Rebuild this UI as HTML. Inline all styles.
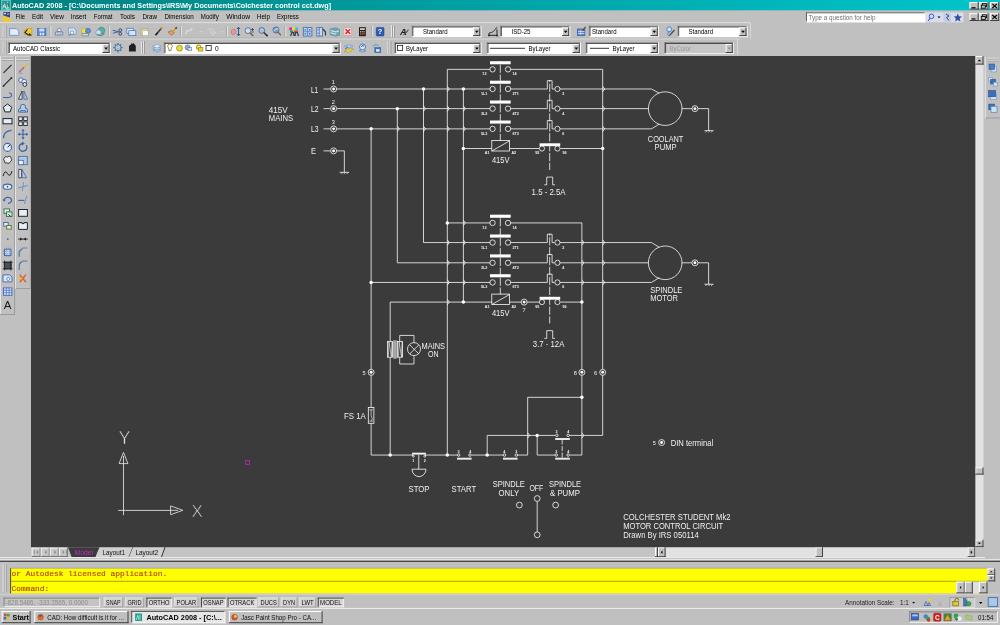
<!DOCTYPE html>
<html lang="en"><head><meta charset="utf-8"><title>AutoCAD 2008 - Colchester control cct.dwg</title>
<style>
html,body{margin:0;padding:0;background:#c0c0c0;overflow:hidden;width:1000px;height:625px}
svg{display:block;position:absolute;left:0;top:0;will-change:transform}
text{font-family:"Liberation Sans",sans-serif;white-space:pre}
.mono{font-family:"Liberation Mono",monospace}
</style></head><body>
<svg width="1000" height="625" viewBox="0 0 1000 625">
<defs>
<linearGradient id="tg" x1="0" y1="0" x2="1" y2="0"><stop offset="0" stop-color="#008080"/><stop offset="1" stop-color="#00c6cc"/></linearGradient>
</defs>
<rect x="0.00" y="0.00" width="1000.00" height="625.00" fill="#c0c0c0" />
<rect x="0.00" y="0.00" width="1000.00" height="10.30" fill="url(#tg)" />
<rect x="1.3" y="0.7" width="9.4" height="9.2" fill="#2c9890" stroke="#84e0d8" stroke-width="0.7"/>
<path d="M2.6 8.6 L4.3 3.2 L6 8.6 M3.2 6.8 h2.2" stroke="#d8f4f0" stroke-width="0.9" fill="none"/><path d="M7.6 1.6 v7.6 M6.4 8.6 a1.3 1.5 0 1 0 2.6 0 a1.3 1.5 0 1 0 -2.6 0" stroke="#c0e8e4" stroke-width="0.7" fill="none"/><path d="M3.4 4.6 l1 -1.6 M7.6 3 l1.2 3" stroke="#1c5c58" stroke-width="0.8" fill="none"/>
<text x="12.10" y="8.01" font-size="7.7" fill="#fff" text-anchor="start" font-weight="bold" textLength="319.00" lengthAdjust="spacingAndGlyphs" >AutoCAD 2008 - [C:\Documents and Settings\IRS\My Documents\Colchester control cct.dwg]</text>
<rect x="969.50" y="2.00" width="9.20" height="7.60" fill="#c0c0c0" />
<line x1="969.50" y1="2.50" x2="978.70" y2="2.50" stroke="#ffffff" stroke-width="1" />
<line x1="970.00" y1="2.00" x2="970.00" y2="9.60" stroke="#ffffff" stroke-width="1" />
<line x1="969.50" y1="9.10" x2="978.70" y2="9.10" stroke="#404040" stroke-width="1" />
<line x1="978.20" y1="2.00" x2="978.20" y2="9.60" stroke="#404040" stroke-width="1" />
<rect x="979.30" y="2.00" width="9.20" height="7.60" fill="#c0c0c0" />
<line x1="979.30" y1="2.50" x2="988.50" y2="2.50" stroke="#ffffff" stroke-width="1" />
<line x1="979.80" y1="2.00" x2="979.80" y2="9.60" stroke="#ffffff" stroke-width="1" />
<line x1="979.30" y1="9.10" x2="988.50" y2="9.10" stroke="#404040" stroke-width="1" />
<line x1="988.00" y1="2.00" x2="988.00" y2="9.60" stroke="#404040" stroke-width="1" />
<rect x="990.00" y="2.00" width="9.20" height="7.60" fill="#c0c0c0" />
<line x1="990.00" y1="2.50" x2="999.20" y2="2.50" stroke="#ffffff" stroke-width="1" />
<line x1="990.50" y1="2.00" x2="990.50" y2="9.60" stroke="#ffffff" stroke-width="1" />
<line x1="990.00" y1="9.10" x2="999.20" y2="9.10" stroke="#404040" stroke-width="1" />
<line x1="998.70" y1="2.00" x2="998.70" y2="9.60" stroke="#404040" stroke-width="1" />
<rect x="969.50" y="13.20" width="9.20" height="7.80" fill="#c0c0c0" />
<line x1="969.50" y1="13.70" x2="978.70" y2="13.70" stroke="#ffffff" stroke-width="1" />
<line x1="970.00" y1="13.20" x2="970.00" y2="21.00" stroke="#ffffff" stroke-width="1" />
<line x1="969.50" y1="20.50" x2="978.70" y2="20.50" stroke="#404040" stroke-width="1" />
<line x1="978.20" y1="13.20" x2="978.20" y2="21.00" stroke="#404040" stroke-width="1" />
<rect x="979.30" y="13.20" width="9.20" height="7.80" fill="#c0c0c0" />
<line x1="979.30" y1="13.70" x2="988.50" y2="13.70" stroke="#ffffff" stroke-width="1" />
<line x1="979.80" y1="13.20" x2="979.80" y2="21.00" stroke="#ffffff" stroke-width="1" />
<line x1="979.30" y1="20.50" x2="988.50" y2="20.50" stroke="#404040" stroke-width="1" />
<line x1="988.00" y1="13.20" x2="988.00" y2="21.00" stroke="#404040" stroke-width="1" />
<rect x="990.00" y="13.20" width="9.20" height="7.80" fill="#c0c0c0" />
<line x1="990.00" y1="13.70" x2="999.20" y2="13.70" stroke="#ffffff" stroke-width="1" />
<line x1="990.50" y1="13.20" x2="990.50" y2="21.00" stroke="#ffffff" stroke-width="1" />
<line x1="990.00" y1="20.50" x2="999.20" y2="20.50" stroke="#404040" stroke-width="1" />
<line x1="998.70" y1="13.20" x2="998.70" y2="21.00" stroke="#404040" stroke-width="1" />
<line x1="971.50" y1="7.80" x2="975.50" y2="7.80" stroke="#000" stroke-width="1.2" />
<rect x="982.5" y="3.6" width="4" height="3" fill="none" stroke="#000" stroke-width="0.8"/>
<rect x="981.3" y="5.2" width="4" height="3" fill="#c0c0c0" stroke="#000" stroke-width="0.8"/>
<path d="M992.3 3.8 l4.6 4.2 M996.9 3.8 l-4.6 4.2" stroke="#000" stroke-width="1.1" fill="none"/>
<line x1="971.50" y1="19.00" x2="975.50" y2="19.00" stroke="#000" stroke-width="1.2" />
<rect x="982.5" y="14.799999999999999" width="4" height="3" fill="none" stroke="#000" stroke-width="0.8"/>
<rect x="981.3" y="16.4" width="4" height="3" fill="#c0c0c0" stroke="#000" stroke-width="0.8"/>
<path d="M992.3 15.0 l4.6 4.2 M996.9 15.0 l-4.6 4.2" stroke="#000" stroke-width="1.1" fill="none"/>
<path d="M2.8 16 L11.4 19.6 L11.4 21.4 L2.8 21.4z" fill="#f8cc14"/><path d="M3.4 12 h6.6 v5.6 l-6.6 -2z" fill="#34487c"/><rect x="4.2" y="12.8" width="1.6" height="1.5" fill="#e4ecfc"/><rect x="7" y="13.4" width="2.2" height="1.2" fill="#9cb8e8"/>
<text x="15.50" y="18.96" font-size="6.6" fill="#000" text-anchor="start" textLength="9.50" lengthAdjust="spacingAndGlyphs" >File</text>
<text x="32.00" y="18.96" font-size="6.6" fill="#000" text-anchor="start" textLength="11.00" lengthAdjust="spacingAndGlyphs" >Edit</text>
<text x="50.00" y="18.96" font-size="6.6" fill="#000" text-anchor="start" textLength="13.80" lengthAdjust="spacingAndGlyphs" >View</text>
<text x="70.80" y="18.96" font-size="6.6" fill="#000" text-anchor="start" textLength="15.50" lengthAdjust="spacingAndGlyphs" >Insert</text>
<text x="93.80" y="18.96" font-size="6.6" fill="#000" text-anchor="start" textLength="18.70" lengthAdjust="spacingAndGlyphs" >Format</text>
<text x="120.00" y="18.96" font-size="6.6" fill="#000" text-anchor="start" textLength="15.00" lengthAdjust="spacingAndGlyphs" >Tools</text>
<text x="142.50" y="18.96" font-size="6.6" fill="#000" text-anchor="start" textLength="14.50" lengthAdjust="spacingAndGlyphs" >Draw</text>
<text x="164.50" y="18.96" font-size="6.6" fill="#000" text-anchor="start" textLength="29.30" lengthAdjust="spacingAndGlyphs" >Dimension</text>
<text x="200.80" y="18.96" font-size="6.6" fill="#000" text-anchor="start" textLength="18.00" lengthAdjust="spacingAndGlyphs" >Modify</text>
<text x="226.30" y="18.96" font-size="6.6" fill="#000" text-anchor="start" textLength="23.70" lengthAdjust="spacingAndGlyphs" >Window</text>
<text x="256.80" y="18.96" font-size="6.6" fill="#000" text-anchor="start" textLength="13.20" lengthAdjust="spacingAndGlyphs" >Help</text>
<text x="277.00" y="18.96" font-size="6.6" fill="#000" text-anchor="start" textLength="21.80" lengthAdjust="spacingAndGlyphs" >Express</text>
<rect x="806.00" y="12.30" width="119.50" height="10.00" fill="#fff" />
<line x1="806.00" y1="12.80" x2="925.50" y2="12.80" stroke="#606060" stroke-width="1" />
<line x1="806.50" y1="12.30" x2="806.50" y2="22.30" stroke="#606060" stroke-width="1" />
<line x1="806.00" y1="21.80" x2="925.50" y2="21.80" stroke="#ffffff" stroke-width="1" />
<line x1="925.00" y1="12.30" x2="925.00" y2="22.30" stroke="#ffffff" stroke-width="1" />
<text x="808.50" y="19.76" font-size="6.6" fill="#707070" text-anchor="start" textLength="67.00" lengthAdjust="spacingAndGlyphs" >Type a question for help</text>
<rect x="925.50" y="12.30" width="38.00" height="10.00" fill="#d8dcec" />
<circle cx="931.5" cy="16.3" r="2.3" fill="none" stroke="#3858b8" stroke-width="1"/><line x1="930" y1="18.3" x2="928.3" y2="20.8" stroke="#3858b8" stroke-width="1.1"/>
<path d="M937.5 16.5 h3 l-1.5 1.8z" fill="#000"/>
<rect x="943.50" y="13.00" width="7.50" height="8.60" fill="#c4cce4" />
<path d="M946 14 l3 2 l-2.5 1.5 l2.5 3" stroke="#2848a0" stroke-width="1" fill="none"/>
<path d="M957.8 13.5 l1.2 2.7 2.9 .3 -2.2 2 .7 2.9 -2.6 -1.5 -2.6 1.5 .7 -2.9 -2.2 -2 2.9 -.3z" fill="#3050a8"/>
<line x1="0.00" y1="22.60" x2="750.50" y2="22.60" stroke="#e8e8e8" stroke-width="0.8" />
<line x1="750.50" y1="22.60" x2="750.50" y2="38.40" stroke="#e0e0e0" stroke-width="0.8" />
<line x1="737.60" y1="39.00" x2="737.60" y2="55.00" stroke="#e0e0e0" stroke-width="0.8" />
<line x1="0.00" y1="38.20" x2="740.00" y2="38.20" stroke="#989898" stroke-width="0.6" />
<line x1="0.00" y1="38.90" x2="740.00" y2="38.90" stroke="#ececec" stroke-width="0.7" />
<line x1="3.20" y1="25.00" x2="3.20" y2="37.00" stroke="#f4f4f4" stroke-width="0.9" />
<line x1="4.10" y1="25.00" x2="4.10" y2="37.00" stroke="#8a8a8a" stroke-width="0.7" />
<line x1="5.20" y1="25.00" x2="5.20" y2="37.00" stroke="#f4f4f4" stroke-width="0.9" />
<line x1="6.10" y1="25.00" x2="6.10" y2="37.00" stroke="#8a8a8a" stroke-width="0.7" />
<line x1="3.20" y1="41.00" x2="3.20" y2="54.00" stroke="#f4f4f4" stroke-width="0.9" />
<line x1="4.10" y1="41.00" x2="4.10" y2="54.00" stroke="#8a8a8a" stroke-width="0.7" />
<line x1="5.20" y1="41.00" x2="5.20" y2="54.00" stroke="#f4f4f4" stroke-width="0.9" />
<line x1="6.10" y1="41.00" x2="6.10" y2="54.00" stroke="#8a8a8a" stroke-width="0.7" />
<line x1="50.00" y1="26.00" x2="50.00" y2="36.50" stroke="#8c8c8c" stroke-width="0.7" />
<line x1="50.80" y1="26.00" x2="50.80" y2="36.50" stroke="#f2f2f2" stroke-width="0.8" />
<line x1="108.50" y1="26.00" x2="108.50" y2="36.50" stroke="#8c8c8c" stroke-width="0.7" />
<line x1="109.30" y1="26.00" x2="109.30" y2="36.50" stroke="#f2f2f2" stroke-width="0.8" />
<line x1="180.50" y1="26.00" x2="180.50" y2="36.50" stroke="#8c8c8c" stroke-width="0.7" />
<line x1="181.30" y1="26.00" x2="181.30" y2="36.50" stroke="#f2f2f2" stroke-width="0.8" />
<line x1="226.50" y1="26.00" x2="226.50" y2="36.50" stroke="#8c8c8c" stroke-width="0.7" />
<line x1="227.30" y1="26.00" x2="227.30" y2="36.50" stroke="#f2f2f2" stroke-width="0.8" />
<line x1="285.00" y1="26.00" x2="285.00" y2="36.50" stroke="#8c8c8c" stroke-width="0.7" />
<line x1="285.80" y1="26.00" x2="285.80" y2="36.50" stroke="#f2f2f2" stroke-width="0.8" />
<line x1="371.50" y1="26.00" x2="371.50" y2="36.50" stroke="#8c8c8c" stroke-width="0.7" />
<line x1="372.30" y1="26.00" x2="372.30" y2="36.50" stroke="#f2f2f2" stroke-width="0.8" />
<line x1="391.50" y1="25.00" x2="391.50" y2="37.00" stroke="#f4f4f4" stroke-width="0.9" />
<line x1="392.40" y1="25.00" x2="392.40" y2="37.00" stroke="#8a8a8a" stroke-width="0.7" />
<line x1="393.50" y1="25.00" x2="393.50" y2="37.00" stroke="#f4f4f4" stroke-width="0.9" />
<line x1="394.40" y1="25.00" x2="394.40" y2="37.00" stroke="#8a8a8a" stroke-width="0.7" />
<line x1="141.50" y1="41.00" x2="141.50" y2="54.00" stroke="#f4f4f4" stroke-width="0.9" />
<line x1="142.40" y1="41.00" x2="142.40" y2="54.00" stroke="#8a8a8a" stroke-width="0.7" />
<line x1="143.50" y1="41.00" x2="143.50" y2="54.00" stroke="#f4f4f4" stroke-width="0.9" />
<line x1="144.40" y1="41.00" x2="144.40" y2="54.00" stroke="#8a8a8a" stroke-width="0.7" />
<line x1="388.00" y1="41.00" x2="388.00" y2="54.00" stroke="#f4f4f4" stroke-width="0.9" />
<line x1="388.90" y1="41.00" x2="388.90" y2="54.00" stroke="#8a8a8a" stroke-width="0.7" />
<line x1="390.00" y1="41.00" x2="390.00" y2="54.00" stroke="#f4f4f4" stroke-width="0.9" />
<line x1="390.90" y1="41.00" x2="390.90" y2="54.00" stroke="#8a8a8a" stroke-width="0.7" />
<rect x="411.70" y="25.80" width="69.60" height="11.30" fill="#fff" />
<line x1="411.70" y1="26.20" x2="481.30" y2="26.20" stroke="#707070" stroke-width="0.8" />
<line x1="412.10" y1="25.80" x2="412.10" y2="37.10" stroke="#707070" stroke-width="0.8" />
<line x1="412.50" y1="27.00" x2="480.50" y2="27.00" stroke="#303030" stroke-width="0.8" />
<line x1="412.90" y1="26.60" x2="412.90" y2="36.30" stroke="#303030" stroke-width="0.8" />
<line x1="411.70" y1="36.70" x2="481.30" y2="36.70" stroke="#fafafa" stroke-width="0.8" />
<line x1="480.90" y1="25.80" x2="480.90" y2="37.10" stroke="#fafafa" stroke-width="0.8" />
<rect x="473.10" y="27.50" width="7.20" height="8.60" fill="#c0c0c0" />
<line x1="473.10" y1="28.00" x2="480.30" y2="28.00" stroke="#ffffff" stroke-width="1" />
<line x1="473.60" y1="27.50" x2="473.60" y2="36.10" stroke="#ffffff" stroke-width="1" />
<line x1="473.10" y1="35.60" x2="480.30" y2="35.60" stroke="#404040" stroke-width="1" />
<line x1="479.80" y1="27.50" x2="479.80" y2="36.10" stroke="#404040" stroke-width="1" />
<path d="M475.00 30.75 h3.6 l-1.8 2.2z" fill="#000"/>
<text x="423.00" y="34.08" font-size="6.5" fill="#000" text-anchor="start" textLength="24.50" lengthAdjust="spacingAndGlyphs" >Standard</text>
<rect x="500.20" y="25.80" width="70.00" height="11.30" fill="#fff" />
<line x1="500.20" y1="26.20" x2="570.20" y2="26.20" stroke="#707070" stroke-width="0.8" />
<line x1="500.60" y1="25.80" x2="500.60" y2="37.10" stroke="#707070" stroke-width="0.8" />
<line x1="501.00" y1="27.00" x2="569.40" y2="27.00" stroke="#303030" stroke-width="0.8" />
<line x1="501.40" y1="26.60" x2="501.40" y2="36.30" stroke="#303030" stroke-width="0.8" />
<line x1="500.20" y1="36.70" x2="570.20" y2="36.70" stroke="#fafafa" stroke-width="0.8" />
<line x1="569.80" y1="25.80" x2="569.80" y2="37.10" stroke="#fafafa" stroke-width="0.8" />
<rect x="562.00" y="27.50" width="7.20" height="8.60" fill="#c0c0c0" />
<line x1="562.00" y1="28.00" x2="569.20" y2="28.00" stroke="#ffffff" stroke-width="1" />
<line x1="562.50" y1="27.50" x2="562.50" y2="36.10" stroke="#ffffff" stroke-width="1" />
<line x1="562.00" y1="35.60" x2="569.20" y2="35.60" stroke="#404040" stroke-width="1" />
<line x1="568.70" y1="27.50" x2="568.70" y2="36.10" stroke="#404040" stroke-width="1" />
<path d="M563.90 30.75 h3.6 l-1.8 2.2z" fill="#000"/>
<text x="511.50" y="34.08" font-size="6.5" fill="#000" text-anchor="start" textLength="19.00" lengthAdjust="spacingAndGlyphs" >ISD-25</text>
<rect x="588.80" y="25.80" width="70.00" height="11.30" fill="#fff" />
<line x1="588.80" y1="26.20" x2="658.80" y2="26.20" stroke="#707070" stroke-width="0.8" />
<line x1="589.20" y1="25.80" x2="589.20" y2="37.10" stroke="#707070" stroke-width="0.8" />
<line x1="589.60" y1="27.00" x2="658.00" y2="27.00" stroke="#303030" stroke-width="0.8" />
<line x1="590.00" y1="26.60" x2="590.00" y2="36.30" stroke="#303030" stroke-width="0.8" />
<line x1="588.80" y1="36.70" x2="658.80" y2="36.70" stroke="#fafafa" stroke-width="0.8" />
<line x1="658.40" y1="25.80" x2="658.40" y2="37.10" stroke="#fafafa" stroke-width="0.8" />
<rect x="650.60" y="27.50" width="7.20" height="8.60" fill="#c0c0c0" />
<line x1="650.60" y1="28.00" x2="657.80" y2="28.00" stroke="#ffffff" stroke-width="1" />
<line x1="651.10" y1="27.50" x2="651.10" y2="36.10" stroke="#ffffff" stroke-width="1" />
<line x1="650.60" y1="35.60" x2="657.80" y2="35.60" stroke="#404040" stroke-width="1" />
<line x1="657.30" y1="27.50" x2="657.30" y2="36.10" stroke="#404040" stroke-width="1" />
<path d="M652.50 30.75 h3.6 l-1.8 2.2z" fill="#000"/>
<text x="592.00" y="34.08" font-size="6.5" fill="#000" text-anchor="start" textLength="24.50" lengthAdjust="spacingAndGlyphs" >Standard</text>
<rect x="677.50" y="25.80" width="70.00" height="11.30" fill="#fff" />
<line x1="677.50" y1="26.20" x2="747.50" y2="26.20" stroke="#707070" stroke-width="0.8" />
<line x1="677.90" y1="25.80" x2="677.90" y2="37.10" stroke="#707070" stroke-width="0.8" />
<line x1="678.30" y1="27.00" x2="746.70" y2="27.00" stroke="#303030" stroke-width="0.8" />
<line x1="678.70" y1="26.60" x2="678.70" y2="36.30" stroke="#303030" stroke-width="0.8" />
<line x1="677.50" y1="36.70" x2="747.50" y2="36.70" stroke="#fafafa" stroke-width="0.8" />
<line x1="747.10" y1="25.80" x2="747.10" y2="37.10" stroke="#fafafa" stroke-width="0.8" />
<rect x="739.30" y="27.50" width="7.20" height="8.60" fill="#c0c0c0" />
<line x1="739.30" y1="28.00" x2="746.50" y2="28.00" stroke="#ffffff" stroke-width="1" />
<line x1="739.80" y1="27.50" x2="739.80" y2="36.10" stroke="#ffffff" stroke-width="1" />
<line x1="739.30" y1="35.60" x2="746.50" y2="35.60" stroke="#404040" stroke-width="1" />
<line x1="746.00" y1="27.50" x2="746.00" y2="36.10" stroke="#404040" stroke-width="1" />
<path d="M741.20 30.75 h3.6 l-1.8 2.2z" fill="#000"/>
<text x="688.50" y="34.08" font-size="6.5" fill="#000" text-anchor="start" textLength="24.50" lengthAdjust="spacingAndGlyphs" >Standard</text>
<rect x="8.20" y="42.30" width="102.40" height="11.70" fill="#fff" />
<line x1="8.20" y1="42.70" x2="110.60" y2="42.70" stroke="#707070" stroke-width="0.8" />
<line x1="8.60" y1="42.30" x2="8.60" y2="54.00" stroke="#707070" stroke-width="0.8" />
<line x1="9.00" y1="43.50" x2="109.80" y2="43.50" stroke="#303030" stroke-width="0.8" />
<line x1="9.40" y1="43.10" x2="9.40" y2="53.20" stroke="#303030" stroke-width="0.8" />
<line x1="8.20" y1="53.60" x2="110.60" y2="53.60" stroke="#fafafa" stroke-width="0.8" />
<line x1="110.20" y1="42.30" x2="110.20" y2="54.00" stroke="#fafafa" stroke-width="0.8" />
<rect x="102.40" y="44.00" width="7.20" height="9.00" fill="#c0c0c0" />
<line x1="102.40" y1="44.50" x2="109.60" y2="44.50" stroke="#ffffff" stroke-width="1" />
<line x1="102.90" y1="44.00" x2="102.90" y2="53.00" stroke="#ffffff" stroke-width="1" />
<line x1="102.40" y1="52.50" x2="109.60" y2="52.50" stroke="#404040" stroke-width="1" />
<line x1="109.10" y1="44.00" x2="109.10" y2="53.00" stroke="#404040" stroke-width="1" />
<path d="M104.30 47.45 h3.6 l-1.8 2.2z" fill="#000"/>
<text x="13.00" y="50.78" font-size="6.5" fill="#000" text-anchor="start" textLength="47.00" lengthAdjust="spacingAndGlyphs" >AutoCAD Classic</text>
<rect x="163.80" y="42.30" width="176.80" height="11.70" fill="#fff" />
<line x1="163.80" y1="42.70" x2="340.60" y2="42.70" stroke="#707070" stroke-width="0.8" />
<line x1="164.20" y1="42.30" x2="164.20" y2="54.00" stroke="#707070" stroke-width="0.8" />
<line x1="164.60" y1="43.50" x2="339.80" y2="43.50" stroke="#303030" stroke-width="0.8" />
<line x1="165.00" y1="43.10" x2="165.00" y2="53.20" stroke="#303030" stroke-width="0.8" />
<line x1="163.80" y1="53.60" x2="340.60" y2="53.60" stroke="#fafafa" stroke-width="0.8" />
<line x1="340.20" y1="42.30" x2="340.20" y2="54.00" stroke="#fafafa" stroke-width="0.8" />
<rect x="332.40" y="44.00" width="7.20" height="9.00" fill="#c0c0c0" />
<line x1="332.40" y1="44.50" x2="339.60" y2="44.50" stroke="#ffffff" stroke-width="1" />
<line x1="332.90" y1="44.00" x2="332.90" y2="53.00" stroke="#ffffff" stroke-width="1" />
<line x1="332.40" y1="52.50" x2="339.60" y2="52.50" stroke="#404040" stroke-width="1" />
<line x1="339.10" y1="44.00" x2="339.10" y2="53.00" stroke="#404040" stroke-width="1" />
<path d="M334.30 47.45 h3.6 l-1.8 2.2z" fill="#000"/>
<rect x="394.40" y="42.30" width="87.00" height="11.70" fill="#fff" />
<line x1="394.40" y1="42.70" x2="481.40" y2="42.70" stroke="#707070" stroke-width="0.8" />
<line x1="394.80" y1="42.30" x2="394.80" y2="54.00" stroke="#707070" stroke-width="0.8" />
<line x1="395.20" y1="43.50" x2="480.60" y2="43.50" stroke="#303030" stroke-width="0.8" />
<line x1="395.60" y1="43.10" x2="395.60" y2="53.20" stroke="#303030" stroke-width="0.8" />
<line x1="394.40" y1="53.60" x2="481.40" y2="53.60" stroke="#fafafa" stroke-width="0.8" />
<line x1="481.00" y1="42.30" x2="481.00" y2="54.00" stroke="#fafafa" stroke-width="0.8" />
<rect x="473.20" y="44.00" width="7.20" height="9.00" fill="#c0c0c0" />
<line x1="473.20" y1="44.50" x2="480.40" y2="44.50" stroke="#ffffff" stroke-width="1" />
<line x1="473.70" y1="44.00" x2="473.70" y2="53.00" stroke="#ffffff" stroke-width="1" />
<line x1="473.20" y1="52.50" x2="480.40" y2="52.50" stroke="#404040" stroke-width="1" />
<line x1="479.90" y1="44.00" x2="479.90" y2="53.00" stroke="#404040" stroke-width="1" />
<path d="M475.10 47.45 h3.6 l-1.8 2.2z" fill="#000"/>
<text x="406.00" y="50.78" font-size="6.5" fill="#000" text-anchor="start" textLength="22.00" lengthAdjust="spacingAndGlyphs" >ByLayer</text>
<rect x="486.80" y="42.30" width="94.00" height="11.70" fill="#fff" />
<line x1="486.80" y1="42.70" x2="580.80" y2="42.70" stroke="#707070" stroke-width="0.8" />
<line x1="487.20" y1="42.30" x2="487.20" y2="54.00" stroke="#707070" stroke-width="0.8" />
<line x1="487.60" y1="43.50" x2="580.00" y2="43.50" stroke="#303030" stroke-width="0.8" />
<line x1="488.00" y1="43.10" x2="488.00" y2="53.20" stroke="#303030" stroke-width="0.8" />
<line x1="486.80" y1="53.60" x2="580.80" y2="53.60" stroke="#fafafa" stroke-width="0.8" />
<line x1="580.40" y1="42.30" x2="580.40" y2="54.00" stroke="#fafafa" stroke-width="0.8" />
<rect x="572.60" y="44.00" width="7.20" height="9.00" fill="#c0c0c0" />
<line x1="572.60" y1="44.50" x2="579.80" y2="44.50" stroke="#ffffff" stroke-width="1" />
<line x1="573.10" y1="44.00" x2="573.10" y2="53.00" stroke="#ffffff" stroke-width="1" />
<line x1="572.60" y1="52.50" x2="579.80" y2="52.50" stroke="#404040" stroke-width="1" />
<line x1="579.30" y1="44.00" x2="579.30" y2="53.00" stroke="#404040" stroke-width="1" />
<path d="M574.50 47.45 h3.6 l-1.8 2.2z" fill="#000"/>
<text x="528.50" y="50.78" font-size="6.5" fill="#000" text-anchor="start" textLength="22.00" lengthAdjust="spacingAndGlyphs" >ByLayer</text>
<rect x="585.60" y="42.30" width="73.20" height="11.70" fill="#fff" />
<line x1="585.60" y1="42.70" x2="658.80" y2="42.70" stroke="#707070" stroke-width="0.8" />
<line x1="586.00" y1="42.30" x2="586.00" y2="54.00" stroke="#707070" stroke-width="0.8" />
<line x1="586.40" y1="43.50" x2="658.00" y2="43.50" stroke="#303030" stroke-width="0.8" />
<line x1="586.80" y1="43.10" x2="586.80" y2="53.20" stroke="#303030" stroke-width="0.8" />
<line x1="585.60" y1="53.60" x2="658.80" y2="53.60" stroke="#fafafa" stroke-width="0.8" />
<line x1="658.40" y1="42.30" x2="658.40" y2="54.00" stroke="#fafafa" stroke-width="0.8" />
<rect x="650.60" y="44.00" width="7.20" height="9.00" fill="#c0c0c0" />
<line x1="650.60" y1="44.50" x2="657.80" y2="44.50" stroke="#ffffff" stroke-width="1" />
<line x1="651.10" y1="44.00" x2="651.10" y2="53.00" stroke="#ffffff" stroke-width="1" />
<line x1="650.60" y1="52.50" x2="657.80" y2="52.50" stroke="#404040" stroke-width="1" />
<line x1="657.30" y1="44.00" x2="657.30" y2="53.00" stroke="#404040" stroke-width="1" />
<path d="M652.50 47.45 h3.6 l-1.8 2.2z" fill="#000"/>
<text x="612.50" y="50.78" font-size="6.5" fill="#000" text-anchor="start" textLength="22.00" lengthAdjust="spacingAndGlyphs" >ByLayer</text>
<rect x="664.40" y="42.30" width="69.40" height="11.70" fill="#c6c6c6" />
<line x1="664.40" y1="42.70" x2="733.80" y2="42.70" stroke="#707070" stroke-width="0.8" />
<line x1="664.80" y1="42.30" x2="664.80" y2="54.00" stroke="#707070" stroke-width="0.8" />
<line x1="665.20" y1="43.50" x2="733.00" y2="43.50" stroke="#303030" stroke-width="0.8" />
<line x1="665.60" y1="43.10" x2="665.60" y2="53.20" stroke="#303030" stroke-width="0.8" />
<line x1="664.40" y1="53.60" x2="733.80" y2="53.60" stroke="#fafafa" stroke-width="0.8" />
<line x1="733.40" y1="42.30" x2="733.40" y2="54.00" stroke="#fafafa" stroke-width="0.8" />
<rect x="725.60" y="44.00" width="7.20" height="9.00" fill="#c0c0c0" />
<line x1="725.60" y1="44.50" x2="732.80" y2="44.50" stroke="#ffffff" stroke-width="1" />
<line x1="726.10" y1="44.00" x2="726.10" y2="53.00" stroke="#ffffff" stroke-width="1" />
<line x1="725.60" y1="52.50" x2="732.80" y2="52.50" stroke="#404040" stroke-width="1" />
<line x1="732.30" y1="44.00" x2="732.30" y2="53.00" stroke="#404040" stroke-width="1" />
<path d="M727.50 47.45 h3.6 l-1.8 2.2z" fill="#909090"/>
<text x="669.50" y="50.78" font-size="6.5" fill="#9a9a9a" text-anchor="start" textLength="21.50" lengthAdjust="spacingAndGlyphs" >ByColor</text>
<rect x="397.5" y="45.3" width="5.2" height="5.2" fill="#fff" stroke="#000" stroke-width="0.7"/>
<line x1="490.00" y1="48.30" x2="525.00" y2="48.30" stroke="#000" stroke-width="0.8" />
<line x1="590.00" y1="48.30" x2="609.00" y2="48.30" stroke="#000" stroke-width="0.8" />
<path d="M168.6 48 a2.3 2.3 0 1 1 2.8 0 l-.3 2.6 h-2.2z" fill="#fffcd8" stroke="#504c30" stroke-width="0.6"/>
<circle cx="179.5" cy="48.2" r="2.9" fill="#f0e020" stroke="#706010" stroke-width="0.6"/>
<circle cx="187.6" cy="47.4" r="2.5" fill="#9ab4d0" stroke="#406080" stroke-width="0.6"/><rect x="188" y="47.6" width="3.6" height="3.2" fill="#dce8f4" stroke="#406080" stroke-width="0.5"/>
<circle cx="198.7" cy="47.2" r="2" fill="none" stroke="#b0a000" stroke-width="1.3"/><rect x="198.5" y="47.5" width="4.4" height="3.6" fill="#e8d820" stroke="#807010" stroke-width="0.5"/>
<rect x="206" y="45.4" width="5.2" height="5.2" fill="#fff" stroke="#000" stroke-width="0.7"/>
<text x="215.00" y="50.56" font-size="6.6" fill="#000" text-anchor="start" >0</text>
<path d="M9.6 28.6 h6.6 l2.6 2.2 v4.6 h-9.2z" fill="#e4eef8" stroke="#6c94c4" stroke-width="0.9" />
<path d="M24.3 30.5 l3 -2 l4.5 0 v6 h-7.5z" fill="#f0c830" stroke="#b89018" stroke-width="0.6" />
<path d="M27.5 29.5 l-2.5 3 l3.5 2.8" fill="none" stroke="#202020" stroke-width="1.1" />
<path d="M29 33 l3 2.5 l-3.3 .2z" fill="#202020" stroke="none" stroke-width="1" />
<rect x="37.60" y="28.30" width="8.40" height="7.40" rx="0" fill="#5c8cd0" stroke="#3c68b0" stroke-width="0.6"/>
<rect x="39.30" y="28.60" width="5.00" height="2.80" rx="0" fill="#cfe0f4" stroke="none" stroke-width="1"/>
<rect x="39.80" y="32.80" width="1.60" height="2.60" rx="0" fill="#e8f0fa" stroke="none" stroke-width="1"/>
<rect x="42.40" y="32.80" width="1.60" height="2.60" rx="0" fill="#e8f0fa" stroke="none" stroke-width="1"/>
<path d="M55.3 32 h7.5 v3 h-7.5z" fill="#d0d8e8" stroke="#5870a0" stroke-width="0.7" />
<path d="M57 31.5 l1.2 -3 h2.2 l1 3z" fill="#f4f6fa" stroke="#5870a0" stroke-width="0.7" />
<circle cx="59.00" cy="33.20" r="1.3" fill="#e8ecf4" stroke="#5870a0" stroke-width="0.5"/>
<path d="M68.5 28 h5 l2.6 2 v4.5 h-7.6z" fill="#d8e6f6" stroke="#7098c8" stroke-width="0.8" />
<circle cx="72.00" cy="32.60" r="1.8" fill="#f4f8fc" stroke="#5878a8" stroke-width="0.7"/>
<line x1="70.30" y1="34.20" x2="69.00" y2="36.00" stroke="#5878a8" stroke-width="0.9" />
<circle cx="84.50" cy="31.00" r="3" fill="#f4e048" stroke="#b09818" stroke-width="0.5"/>
<circle cx="88.00" cy="30.80" r="2.6" fill="#5890d8" stroke="#3060a8" stroke-width="0.5"/>
<path d="M82 33.5 h6.5 v2.3 h-6.5z" fill="#d8dce4" stroke="#606878" stroke-width="0.6" />
<circle cx="101.50" cy="30.60" r="3.3" fill="#58b0a0" stroke="#2c7868" stroke-width="0.5"/>
<circle cx="98.50" cy="32.50" r="2.7" fill="#c8e0f0" stroke="#4878a8" stroke-width="0.5"/>
<path d="M97 34.5 l4 1.2 l3.5 -2" fill="none" stroke="#3c8070" stroke-width="0.9" />
<path d="M112.8 30.3 l6 1.6 M113 33.2 l6 -1.6" fill="none" stroke="#3c62a8" stroke-width="1" />
<circle cx="120.30" cy="30.20" r="1.4" fill="none" stroke="#283c78" stroke-width="0.9"/>
<circle cx="120.30" cy="33.80" r="1.4" fill="none" stroke="#283c78" stroke-width="0.9"/>
<rect x="126.80" y="28.30" width="6.50" height="5.00" rx="0" fill="#e0ecf8" stroke="#4c7cbc" stroke-width="0.8"/>
<rect x="128.80" y="30.60" width="7.00" height="5.00" rx="0" fill="#d4e4f4" stroke="#4c7cbc" stroke-width="0.8"/>
<rect x="141.00" y="28.80" width="7.00" height="6.80" rx="0" fill="#f0e0a0" stroke="#a89050" stroke-width="0.6"/>
<rect x="142.60" y="30.80" width="5.60" height="4.80" rx="0" fill="#fcfcfc" stroke="#a0a0a0" stroke-width="0.5"/>
<rect x="143.00" y="28.00" width="3.00" height="1.50" rx="0" fill="#b8b8b8" stroke="none" stroke-width="1"/>
<path d="M161.8 27.8 l-4.2 5" fill="none" stroke="#403830" stroke-width="1.5" />
<path d="M157.8 32.5 l-2.3 2.8" fill="none" stroke="#181818" stroke-width="1.7" />
<path d="M162.3 27.2 l-1.5 1.8" fill="none" stroke="#e89030" stroke-width="1.3" />
<path d="M168 32 l4 -1.5 l2.5 2.5 l-3.5 2.3z" fill="#e8a070" stroke="#804820" stroke-width="0.5" />
<path d="M176.5 27.5 l-4.5 5" fill="none" stroke="#d0a020" stroke-width="1.8" />
<path d="M176.8 27.2 l-1.3 1.5" fill="none" stroke="#604010" stroke-width="1.6" />
<path d="M186 34.5 q0 -4 3 -4 t3 -2.5" fill="none" stroke="#dcdcdc" stroke-width="1.3" />
<path d="M199.6 31 h2.4 l-1.2 1.5z" fill="#d8d8d8" stroke="none" stroke-width="1" />
<path d="M207.5 29 h4 q3 .5 2.5 3 l1.5 0 l-2.5 3 l-2.5 -3 h1.5" fill="none" stroke="#dcdcdc" stroke-width="1.1" stroke-dasharray="1.5 1"/>
<path d="M221.2 31 h2.4 l-1.2 1.5z" fill="#d8d8d8" stroke="none" stroke-width="1" />
<path d="M231 30.5 q2 -2.5 4 -1 q2 1.5 .5 4 l-2.5 1.5 q-2.5 -1 -2 -4.5z" fill="#e89898" stroke="#b06060" stroke-width="0.5" />
<path d="M238.5 27.5 v8 M237 29 l1.5 -1.8 l1.5 1.8 M237 34 l1.5 1.8 l1.5 -1.8" fill="none" stroke="#3058a0" stroke-width="1" />
<circle cx="248.00" cy="30.60" r="2.9" fill="#d0dcec" stroke="#5870a0" stroke-width="0.9"/>
<line x1="250.00" y1="32.80" x2="253.30" y2="36.00" stroke="#705848" stroke-width="1.3" />
<path d="M252.5 28 v3 M251 29.5 h3 M251.3 32 h2.6" fill="none" stroke="#303030" stroke-width="0.7" />
<circle cx="261.80" cy="30.40" r="2.9" fill="#a8c4e4" stroke="#4868a0" stroke-width="0.9"/>
<line x1="263.80" y1="32.50" x2="267.00" y2="35.60" stroke="#202020" stroke-width="1.2" />
<path d="M267.8 36.4 l-2.2 -.3 l1.9 -1.9z" fill="#101010" stroke="none" stroke-width="1" />
<circle cx="276.00" cy="30.00" r="3" fill="#7c9cc8" stroke="#4868a0" stroke-width="0.9"/>
<line x1="278.00" y1="32.30" x2="281.00" y2="35.40" stroke="#806050" stroke-width="1.3" />
<path d="M273.5 31 q2 -3 5 -2" fill="none" stroke="#e8f0fa" stroke-width="0.9" />
<rect x="289.30" y="27.50" width="2.80" height="2.80" rx="0" fill="#e020c0" stroke="none" stroke-width="1"/>
<rect x="292.30" y="27.30" width="2.80" height="2.80" rx="0" fill="#f0e020" stroke="none" stroke-width="1"/>
<rect x="295.30" y="27.50" width="2.80" height="2.80" rx="0" fill="#20c8e0" stroke="none" stroke-width="1"/>
<rect x="290.00" y="30.50" width="3.00" height="2.00" rx="0" fill="#20a040" stroke="none" stroke-width="1"/>
<rect x="294.00" y="30.50" width="4.00" height="2.00" rx="0" fill="#e04040" stroke="none" stroke-width="1"/>
<path d="M290.5 36 l1.5 -3.5 h1.5 l.5 3.5 M295 36 l.5 -3.5 h1.8 l1.2 3.5" fill="none" stroke="#303848" stroke-width="1.2" />
<rect x="303.30" y="27.60" width="8.60" height="8.40" rx="0" fill="#cfe0f4" stroke="#4470b4" stroke-width="0.9"/>
<path d="M307.6 27.6 v8.4 M303.3 31.8 h8.6" fill="none" stroke="#4470b4" stroke-width="0.8" />
<rect x="304.60" y="29.00" width="1.60" height="1.60" rx="0" fill="#4470b4" stroke="none" stroke-width="1"/>
<rect x="308.90" y="29.00" width="1.60" height="1.60" rx="0" fill="#4470b4" stroke="none" stroke-width="1"/>
<rect x="304.60" y="33.00" width="1.60" height="1.60" rx="0" fill="#4470b4" stroke="none" stroke-width="1"/>
<rect x="308.90" y="33.00" width="1.60" height="1.60" rx="0" fill="#4470b4" stroke="none" stroke-width="1"/>
<rect x="316.80" y="27.60" width="5.60" height="8.40" rx="0" fill="#cfe0f4" stroke="#4470b4" stroke-width="0.9"/>
<path d="M319.6 27.6 v8.4" fill="none" stroke="#4470b4" stroke-width="0.7" />
<path d="M323 29 l2.5 3 v3.5" fill="none" stroke="#303848" stroke-width="1.2" />
<rect x="317.80" y="29.30" width="1.20" height="1.20" rx="0" fill="#4470b4" stroke="none" stroke-width="1"/>
<rect x="317.80" y="32.60" width="1.20" height="1.20" rx="0" fill="#4470b4" stroke="none" stroke-width="1"/>
<path d="M330 29 l6 -1.2 l3.5 1.5 v6 l-4 .8 l-5.5 -1.5z" fill="#70a8b8" stroke="#407888" stroke-width="0.5" />
<path d="M330.5 30.5 l5.5 1.5 l3 -1.2 M330.5 32.8 l5.5 1.5" fill="none" stroke="#e8f4f8" stroke-width="0.9" />
<rect x="344.00" y="27.80" width="7.60" height="7.60" rx="0" fill="#f8e8e8" stroke="#d09090" stroke-width="0.6"/>
<path d="M345.5 29.3 l4.6 4.6 M350.1 29.3 l-4.6 4.6" fill="none" stroke="#d83030" stroke-width="1.6" />
<rect x="359.00" y="27.20" width="6.80" height="9.00" rx="0" fill="#281818" stroke="none" stroke-width="1"/>
<rect x="360.00" y="28.20" width="4.80" height="1.80" rx="0" fill="#c8d0c0" stroke="none" stroke-width="1"/>
<rect x="360.00" y="31.00" width="1.10" height="0.90" rx="0" fill="#e8c0b0" stroke="none" stroke-width="1"/>
<rect x="360.00" y="32.60" width="1.10" height="0.90" rx="0" fill="#e8c0b0" stroke="none" stroke-width="1"/>
<rect x="360.00" y="34.20" width="1.10" height="0.90" rx="0" fill="#e05040" stroke="none" stroke-width="1"/>
<rect x="361.75" y="31.00" width="1.10" height="0.90" rx="0" fill="#e8c0b0" stroke="none" stroke-width="1"/>
<rect x="361.75" y="32.60" width="1.10" height="0.90" rx="0" fill="#e8c0b0" stroke="none" stroke-width="1"/>
<rect x="361.75" y="34.20" width="1.10" height="0.90" rx="0" fill="#e05040" stroke="none" stroke-width="1"/>
<rect x="363.50" y="31.00" width="1.10" height="0.90" rx="0" fill="#e8c0b0" stroke="none" stroke-width="1"/>
<rect x="363.50" y="32.60" width="1.10" height="0.90" rx="0" fill="#e8c0b0" stroke="none" stroke-width="1"/>
<rect x="363.50" y="34.20" width="1.10" height="0.90" rx="0" fill="#e05040" stroke="none" stroke-width="1"/>
<rect x="376.20" y="27.40" width="7.80" height="8.60" rx="1" fill="#2c5cb4" stroke="#1c3c84" stroke-width="0.5"/>
<text x="380.10" y="34.45" font-size="7.4" fill="#fff" text-anchor="middle" font-weight="bold" >?</text>
<text x="400.00" y="34.90" font-size="9.5" fill="#181818" text-anchor="start" font-weight="bold" font-style="italic">A</text>
<path d="M408.5 29.5 l-3.5 4.5 l-1.5 .6" fill="none" stroke="#585048" stroke-width="1.2" />
<path d="M488 35.3 h10 M489 33 v3.4 M497 29.5 v7" fill="none" stroke="#101010" stroke-width="0.9" />
<path d="M489 33 q4 .5 7.5 -5" fill="none" stroke="#303030" stroke-width="0.9" />
<path d="M497.2 27 l-1.6 2.2" fill="none" stroke="#806040" stroke-width="1.2" />
<rect x="577.30" y="29.00" width="7.60" height="6.60" rx="0" fill="#5c88cc" stroke="#30509c" stroke-width="0.6"/>
<path d="M578 31.5 h6.4 M578 33.5 h6.4 M580.6 30 v5" fill="none" stroke="#dce8f8" stroke-width="0.7" />
<path d="M585.6 26.8 l-3 3.8" fill="none" stroke="#604838" stroke-width="1.2" />
<circle cx="669.20" cy="29.30" r="2.4" fill="#d4e4f8" stroke="#4878c0" stroke-width="0.9"/>
<path d="M668.8 31.5 l-1.2 3" fill="none" stroke="#4878c0" stroke-width="0.9" />
<path d="M674.5 30 l-4.5 5 l-1.5 .5" fill="none" stroke="#384868" stroke-width="1.2" />
<circle cx="118.00" cy="47.60" r="3" fill="#c8d8e8" stroke="#486c98" stroke-width="1"/>
<circle cx="118.00" cy="47.60" r="1.1" fill="#f0f4f8" stroke="#486c98" stroke-width="0.5"/>
<path d="M118 43 v1.6 M118 50.8 v1.6 M113.4 47.6 h1.6 M121 47.6 h1.6 M114.7 44.3 l1.2 1.2 M120.1 49.7 l1.2 1.2 M121.3 44.3 l-1.2 1.2 M115.9 49.7 l-1.2 1.2" fill="none" stroke="#486c98" stroke-width="1.1" />
<path d="M129 45.8 l2 -1.3 v-.9 h1 v.3 l1.4 -.9 l2.4 2.8 v5.6 h-6.8z" fill="#202020" stroke="none" stroke-width="1" />
<path d="M152.8 50.2 l4.2 -1.9 l4.2 1.9 l-4.2 1.9z" fill="#a8c4e8" stroke="#5c88c4" stroke-width="0.5" />
<path d="M152.8 48.2 l4.2 -1.9 l4.2 1.9 l-4.2 1.9z" fill="#c4d8f0" stroke="#5c88c4" stroke-width="0.5" />
<path d="M152.8 46.2 l4.2 -1.9 l4.2 1.9 l-4.2 1.9z" fill="#e0ecf8" stroke="#5c88c4" stroke-width="0.5" />
<path d="M344.5 46.3 l4 -1.6 l4.5 1.6 l-4 1.6z" fill="#b8d0ec" stroke="#5080c0" stroke-width="0.5" />
<path d="M344 51.5 l5 -3 l4.5 .5 l-5 3.2z" fill="#e8d838" stroke="#a09018" stroke-width="0.5" />
<path d="M345 49 l3 -2" fill="none" stroke="#4070b0" stroke-width="1" />
<circle cx="362.50" cy="47.00" r="3" fill="#dce8f6" stroke="#4470b4" stroke-width="0.9"/>
<path d="M359 50.8 l3.5 -1.5 l3.5 1.5 l-3.5 1.5z" fill="#9cc0e8" stroke="#4070b0" stroke-width="0.5" />
<path d="M361.3 47 q1 -2.5 2.6 -1" fill="none" stroke="#30509c" stroke-width="1" />
<path d="M372.8 46.3 l3 -1.8 l3 1.2" fill="none" stroke="#70a0d8" stroke-width="1.2" />
<rect x="374.80" y="47.60" width="6.00" height="5.00" rx="0" fill="#3c74c0" stroke="#2c5498" stroke-width="0.5"/>
<rect x="376.00" y="49.20" width="3.60" height="2.40" rx="0" fill="#e4eefa" stroke="none" stroke-width="1"/>
<line x1="14.60" y1="56.00" x2="14.60" y2="314.50" stroke="#8c8c8c" stroke-width="0.7" />
<line x1="15.50" y1="56.00" x2="15.50" y2="288.50" stroke="#f0f0f0" stroke-width="0.8" />
<line x1="0.40" y1="56.00" x2="0.40" y2="314.50" stroke="#f4f4f4" stroke-width="0.8" />
<line x1="30.30" y1="57.00" x2="30.30" y2="288.50" stroke="#9a9a9a" stroke-width="0.6" />
<line x1="0.00" y1="314.50" x2="14.90" y2="314.50" stroke="#8c8c8c" stroke-width="0.7" />
<line x1="16.00" y1="288.50" x2="30.50" y2="288.50" stroke="#8c8c8c" stroke-width="0.7" />
<line x1="1.50" y1="57.10" x2="13.50" y2="57.10" stroke="#f4f4f4" stroke-width="0.8" />
<line x1="1.50" y1="57.90" x2="13.50" y2="57.90" stroke="#8a8a8a" stroke-width="0.6" />
<line x1="1.50" y1="59.50" x2="13.50" y2="59.50" stroke="#f4f4f4" stroke-width="0.8" />
<line x1="1.50" y1="60.30" x2="13.50" y2="60.30" stroke="#8a8a8a" stroke-width="0.6" />
<line x1="16.50" y1="57.10" x2="29.50" y2="57.10" stroke="#f4f4f4" stroke-width="0.8" />
<line x1="16.50" y1="57.90" x2="29.50" y2="57.90" stroke="#8a8a8a" stroke-width="0.6" />
<line x1="16.50" y1="59.50" x2="29.50" y2="59.50" stroke="#f4f4f4" stroke-width="0.8" />
<line x1="16.50" y1="60.30" x2="29.50" y2="60.30" stroke="#8a8a8a" stroke-width="0.6" />
<path d="M3.5 72.8 L11.5 64.8" fill="none" stroke="#202428" stroke-width="1.1" />
<path d="M3.5 85.89999999999999 L11.5 77.89999999999999" fill="none" stroke="#202428" stroke-width="1.1" />
<circle cx="3.50" cy="85.90" r="0.9" fill="#202428" stroke="none" stroke-width="1"/>
<circle cx="11.50" cy="77.90" r="0.9" fill="#202428" stroke="none" stroke-width="1"/>
<path d="M3.0 97.5 h6 q3 -.5 2.5 -3 q-.5 -1.8 -2.5 -1.5" fill="none" stroke="#3c64a8" stroke-width="1.1" />
<path d="M7.5 104.1 l4.2 3 l-1.6 4.8 h-5.2 l-1.6 -4.8z" fill="#e4ecf6" stroke="#202428" stroke-width="1" />
<rect x="3.00" y="118.60" width="9.00" height="5.20" rx="0" fill="#e4ecf6" stroke="#202428" stroke-width="1"/>
<path d="M3.5 138.3 q0 -7.5 8 -8" fill="none" stroke="#3c64a8" stroke-width="1.2" />
<circle cx="7.50" cy="147.40" r="4" fill="#e4ecf6" stroke="#3c64a8" stroke-width="1.1"/>
<path d="M7.5 147.39999999999998 l2.6 -2.6" fill="none" stroke="#202428" stroke-width="0.9" />
<path d="M4.0 158.5 q1 -3 3.5 -1.5 q3 -2 3.5 1 q2 2 -.5 3.5 q-1 3 -3.5 1.5 q-3 .5 -2.5 -2 q-1.5 -1 -.5 -2.5z" fill="#e8eef6" stroke="#202428" stroke-width="0.9" />
<path d="M3.0 176.1 q2 -7 4.5 -2.5 t4.5 -2.5" fill="none" stroke="#202428" stroke-width="1" />
<ellipse cx="7.5" cy="186.7" rx="4.4" ry="2.6" fill="#e4ecf6" stroke="#3c64a8" stroke-width="1.1"/>
<circle cx="7.50" cy="186.70" r="0.8" fill="#202428" stroke="none" stroke-width="1"/>
<path d="M4.0 200.8 a3.8 3 0 1 1 4 2.6" fill="none" stroke="#3c64a8" stroke-width="1.2" />
<path d="M2.7 199.3 l1.4 2.4 l1.6 -2z" fill="#3c64a8" stroke="none" stroke-width="1" />
<rect x="4.00" y="208.90" width="5.50" height="4.50" rx="0" fill="#e4ecf6" stroke="#30704c" stroke-width="0.9"/>
<rect x="6.50" y="211.90" width="5.50" height="4.50" rx="0" fill="#d8e8d8" stroke="#30704c" stroke-width="0.9"/>
<path d="M8.5 214.39999999999998 l2 2" fill="none" stroke="#202428" stroke-width="1" />
<rect x="3.70" y="222.50" width="4.50" height="3.60" rx="0" fill="#e4ecf6" stroke="#3c64a8" stroke-width="0.9"/>
<rect x="6.70" y="225.50" width="4.50" height="3.60" rx="0" fill="#e4f0d8" stroke="#507030" stroke-width="0.9"/>
<circle cx="7.80" cy="239.10" r="0.9" fill="#3c64a8" stroke="none" stroke-width="1"/>
<rect x="4.50" y="249.20" width="6.40" height="6.40" rx="0" fill="#d8e4f2" stroke="#3c64a8" stroke-width="0.9"/>
<path d="M3.0 251.2 h9.4 M3.0 253.7 h9.4 M6.5 247.7 v9.4 M9.0 247.7 v9.4" fill="none" stroke="#3c64a8" stroke-width="0.6" stroke-dasharray="1 1"/>
<rect x="4.30" y="262.10" width="6.80" height="6.80" rx="0" fill="#485058" stroke="#202428" stroke-width="0.9"/>
<path d="M2.7 262.3 h10 M2.7 268.8 h10 M4.5 260.5 v10 M10.9 260.5 v10" fill="none" stroke="#202428" stroke-width="0.8" />
<path d="M3.0 274.9 h6.5 l2.5 2 v5 h-9z" fill="#dce8f6" stroke="#3c64a8" stroke-width="0.9" />
<circle cx="8.30" cy="278.90" r="1.6" fill="#f4f8fc" stroke="#3c64a8" stroke-width="0.7"/>
<rect x="3.50" y="287.90" width="8.40" height="7.40" rx="0" fill="#dce8fa" stroke="#3c64c0" stroke-width="0.9"/>
<path d="M3.5 290.3 h8.4 M3.5 292.7 h8.4 M6.3 287.9 v7.4 M9.1 287.9 v7.4" fill="none" stroke="#3c64c0" stroke-width="0.7" />
<text x="7.50" y="308.72" font-size="11.5" fill="#181818" text-anchor="middle" >A</text>
<path d="M19 72.3 l5.5 -5.5" fill="none" stroke="#c06080" stroke-width="1.6" />
<path d="M24 67.3 l3.5 -3.5" fill="none" stroke="#e0c020" stroke-width="1.6" />
<path d="M18.5 73.3 h4" fill="none" stroke="#8090b0" stroke-width="0.8" />
<circle cx="21.00" cy="80.10" r="2.3" fill="#e4ecf6" stroke="#3c64a8" stroke-width="0.9"/>
<circle cx="24.20" cy="81.60" r="2.3" fill="#e4ecf6" stroke="#3c64a8" stroke-width="0.9"/>
<circle cx="24.80" cy="84.50" r="1.9" fill="#e4ecf6" stroke="#202428" stroke-width="0.9"/>
<path d="M22.1 91.0 v8.2 h-3.6z" fill="#e4ecf6" stroke="#202428" stroke-width="0.8" />
<path d="M23.9 91.0 v8.2 h3.6z" fill="#b8cce4" stroke="#3c64a8" stroke-width="0.8" />
<path d="M18.5 112.1 v-2.2 q0 -1.5 2 -1.5 v-1.5 q0 -2.6 2.5 -2.6 t2.5 2.6 v1.5 q2 0 2 1.5 v2.2z" fill="#b8cce4" stroke="#3c64a8" stroke-width="0.9" />
<path d="M20.6 112.1 v-1.6 h4.8 v1.6" fill="none" stroke="#3c64a8" stroke-width="0.8" />
<rect x="18.70" y="116.90" width="3.60" height="3.60" rx="0" fill="#e8eef6" stroke="#202428" stroke-width="0.9"/>
<rect x="18.70" y="121.90" width="3.60" height="3.60" rx="0" fill="#e8eef6" stroke="#202428" stroke-width="0.9"/>
<rect x="23.70" y="116.90" width="3.60" height="3.60" rx="0" fill="#e8eef6" stroke="#202428" stroke-width="0.9"/>
<rect x="23.70" y="121.90" width="3.60" height="3.60" rx="0" fill="#e8eef6" stroke="#202428" stroke-width="0.9"/>
<path d="M23 129.70000000000002 v9.2 M18.4 134.3 h9.2" fill="none" stroke="#3c64a8" stroke-width="1.1" />
<path d="M21.3 131.10000000000002 l1.7 -2 l1.7 2z M21.3 137.5 l1.7 2 l1.7 -2z M19.8 132.60000000000002 l-2 1.7 l2 1.7z M26.2 132.60000000000002 l2 1.7 l-2 1.7z" fill="#3c64a8" stroke="none" stroke-width="1" />
<path d="M26.2 145.2 a3.9 3.9 0 1 1 -3.5 -1.7" fill="none" stroke="#3c64a8" stroke-width="1.3" />
<path d="M22 141.59999999999997 l2.8 2 l-2.8 1.8z" fill="#3c64a8" stroke="none" stroke-width="1" />
<rect x="18.70" y="156.30" width="8.60" height="8.40" rx="0" fill="#b4c8e0" stroke="#3c64a8" stroke-width="0.8"/>
<rect x="18.70" y="160.30" width="4.60" height="4.40" rx="0" fill="#f0f4fa" stroke="#3c64a8" stroke-width="0.8"/>
<path d="M18.8 169.4 h2.6 v8.4 h-2.6z" fill="#f4f6fa" stroke="#202428" stroke-width="0.8" />
<path d="M22 169.4 l4.6 8.4 h-4.6z" fill="#b4c8e0" stroke="#3c64a8" stroke-width="0.8" />
<path d="M18 187.89999999999998 l10 -2.4" fill="none" stroke="#7090c0" stroke-width="1" />
<path d="M23.6 182.2 l-1.2 9" fill="none" stroke="#7090c0" stroke-width="0.9" />
<path d="M18.2 200.4 h6.2" fill="none" stroke="#3c64a8" stroke-width="1.1" />
<path d="M26.8 195.60000000000002 l-2.4 8.4" fill="none" stroke="#7090c0" stroke-width="1" />
<rect x="18.60" y="209.50" width="8.80" height="6.80" rx="0" fill="#e8eef6" stroke="#202428" stroke-width="1"/>
<path d="M18.6 222.6 h3.4 v1 h2 v-1 h3.4 v6.8 h-8.8z" fill="#e8eef6" stroke="#202428" stroke-width="1" />
<path d="M18.2 239.09999999999997 h9.6" fill="none" stroke="#202428" stroke-width="0.9" />
<path d="M22.4 239.09999999999997 l-2.4 -1.7 v3.4z M23.6 239.09999999999997 l2.4 -1.7 v3.4z" fill="#202428" stroke="none" stroke-width="1" />
<path d="M19.2 256.8 v-5.2 l3.6 -3.6 h4.6" fill="none" stroke="#4c6ca0" stroke-width="1.1" />
<path d="M19.2 248.0 h8.4" fill="none" stroke="#a8b8d0" stroke-width="0.7" />
<path d="M19.2 269.90000000000003 v-3.4 q0 -5.4 5.4 -5.4 h2.8" fill="none" stroke="#4c6ca0" stroke-width="1.1" />
<path d="M19.2 261.1 h8.4" fill="none" stroke="#a8b8d0" stroke-width="0.7" />
<path d="M19.8 282.2 l6.2 -7.6 M19.8 274.59999999999997 l6.2 7.6" fill="none" stroke="#d86030" stroke-width="1.5" />
<path d="M19.2 276.9 l3 1.5 l-3 1.5" fill="none" stroke="#f0b020" stroke-width="1.1" />
<line x1="985.30" y1="57.00" x2="985.30" y2="118.00" stroke="#f0f0f0" stroke-width="0.8" />
<line x1="986.00" y1="118.00" x2="1000.00" y2="118.00" stroke="#8c8c8c" stroke-width="0.7" />
<line x1="987.00" y1="58.30" x2="999.00" y2="58.30" stroke="#f4f4f4" stroke-width="0.8" />
<line x1="987.00" y1="59.10" x2="999.00" y2="59.10" stroke="#8a8a8a" stroke-width="0.6" />
<line x1="987.00" y1="60.30" x2="999.00" y2="60.30" stroke="#f4f4f4" stroke-width="0.8" />
<line x1="987.00" y1="61.10" x2="999.00" y2="61.10" stroke="#8a8a8a" stroke-width="0.6" />
<rect x="991.00" y="66.50" width="5.40" height="5.40" rx="0" fill="#d0e2f4" stroke="#6c94c8" stroke-width="0.6"/>
<rect x="989.00" y="64.00" width="5.60" height="5.60" rx="0" fill="#4a7ec0" stroke="#30589c" stroke-width="0.6"/>
<rect x="988.70" y="77.40" width="3.80" height="3.80" rx="0" fill="#cfe2f6" stroke="#6c94c8" stroke-width="0.6"/>
<rect x="990.70" y="79.40" width="4.60" height="4.60" rx="0" fill="#3c6cb0" stroke="#28508c" stroke-width="0.6"/>
<rect x="993.60" y="82.30" width="3.80" height="3.80" rx="0" fill="#cfe2f6" stroke="#6c94c8" stroke-width="0.6"/>
<rect x="990.40" y="94.00" width="6.00" height="5.40" rx="0" fill="#d8e6f6" stroke="#6c94c8" stroke-width="0.6"/>
<rect x="988.60" y="90.60" width="7.00" height="6.20" rx="0" fill="#3c70b8" stroke="#28508c" stroke-width="0.6"/>
<rect x="988.80" y="104.10" width="5.60" height="5.60" rx="0" fill="#3c70b8" stroke="#28508c" stroke-width="0.6"/>
<rect x="991.00" y="106.30" width="6.00" height="6.00" rx="0" fill="#cfe2f6" stroke="#5884bc" stroke-width="0.7"/>
<rect x="975.30" y="56.00" width="8.20" height="491.00" fill="#e2e2e2" />
<rect x="975.30" y="56.00" width="8.20" height="8.60" fill="#c0c0c0" />
<line x1="975.30" y1="56.50" x2="983.50" y2="56.50" stroke="#ffffff" stroke-width="1" />
<line x1="975.80" y1="56.00" x2="975.80" y2="64.60" stroke="#ffffff" stroke-width="1" />
<line x1="975.30" y1="64.10" x2="983.50" y2="64.10" stroke="#404040" stroke-width="1" />
<line x1="983.00" y1="56.00" x2="983.00" y2="64.60" stroke="#404040" stroke-width="1" />
<path d="M977.6999999999999 61.25 h3.4 l-1.7 -1.7z" fill="#000" stroke="none" stroke-width="1" />
<rect x="975.30" y="539.60" width="8.20" height="7.60" fill="#c0c0c0" />
<line x1="975.30" y1="540.10" x2="983.50" y2="540.10" stroke="#ffffff" stroke-width="1" />
<line x1="975.80" y1="539.60" x2="975.80" y2="547.20" stroke="#ffffff" stroke-width="1" />
<line x1="975.30" y1="546.70" x2="983.50" y2="546.70" stroke="#404040" stroke-width="1" />
<line x1="983.00" y1="539.60" x2="983.00" y2="547.20" stroke="#404040" stroke-width="1" />
<path d="M977.6999999999999 542.65 h3.4 l-1.7 1.7z" fill="#000" stroke="none" stroke-width="1" />
<rect x="975.30" y="467.30" width="8.20" height="7.30" fill="#c0c0c0" />
<line x1="975.30" y1="467.80" x2="983.50" y2="467.80" stroke="#ffffff" stroke-width="1" />
<line x1="975.80" y1="467.30" x2="975.80" y2="474.60" stroke="#ffffff" stroke-width="1" />
<line x1="975.30" y1="474.10" x2="983.50" y2="474.10" stroke="#404040" stroke-width="1" />
<line x1="983.00" y1="467.30" x2="983.00" y2="474.60" stroke="#404040" stroke-width="1" />
<rect x="31.00" y="547.20" width="944.30" height="10.00" fill="#c4c4c4" />
<rect x="31.70" y="547.60" width="9.00" height="9.30" fill="#c8c8c8" />
<line x1="31.70" y1="548.10" x2="40.70" y2="548.10" stroke="#f4f4f4" stroke-width="1" />
<line x1="32.20" y1="547.60" x2="32.20" y2="556.90" stroke="#f4f4f4" stroke-width="1" />
<line x1="31.70" y1="556.40" x2="40.70" y2="556.40" stroke="#707070" stroke-width="1" />
<line x1="40.20" y1="547.60" x2="40.20" y2="556.90" stroke="#707070" stroke-width="1" />
<rect x="40.75" y="547.60" width="9.00" height="9.30" fill="#c8c8c8" />
<line x1="40.75" y1="548.10" x2="49.75" y2="548.10" stroke="#f4f4f4" stroke-width="1" />
<line x1="41.25" y1="547.60" x2="41.25" y2="556.90" stroke="#f4f4f4" stroke-width="1" />
<line x1="40.75" y1="556.40" x2="49.75" y2="556.40" stroke="#707070" stroke-width="1" />
<line x1="49.25" y1="547.60" x2="49.25" y2="556.90" stroke="#707070" stroke-width="1" />
<rect x="49.80" y="547.60" width="9.00" height="9.30" fill="#c8c8c8" />
<line x1="49.80" y1="548.10" x2="58.80" y2="548.10" stroke="#f4f4f4" stroke-width="1" />
<line x1="50.30" y1="547.60" x2="50.30" y2="556.90" stroke="#f4f4f4" stroke-width="1" />
<line x1="49.80" y1="556.40" x2="58.80" y2="556.40" stroke="#707070" stroke-width="1" />
<line x1="58.30" y1="547.60" x2="58.30" y2="556.90" stroke="#707070" stroke-width="1" />
<rect x="58.85" y="547.60" width="9.00" height="9.30" fill="#c8c8c8" />
<line x1="58.85" y1="548.10" x2="67.85" y2="548.10" stroke="#f4f4f4" stroke-width="1" />
<line x1="59.35" y1="547.60" x2="59.35" y2="556.90" stroke="#f4f4f4" stroke-width="1" />
<line x1="58.85" y1="556.40" x2="67.85" y2="556.40" stroke="#707070" stroke-width="1" />
<line x1="67.35" y1="547.60" x2="67.35" y2="556.90" stroke="#707070" stroke-width="1" />
<path d="M38.25 550.1 v4.2 l-2.1 -2.1z" fill="#8c8c8c" stroke="none" stroke-width="1" />
<line x1="34.30" y1="550.10" x2="34.30" y2="554.30" stroke="#8c8c8c" stroke-width="0.9" />
<path d="M46.65 550.1 v4.2 l-2.1 -2.1z" fill="#8c8c8c" stroke="none" stroke-width="1" />
<path d="M54.25 550.1 v4.2 l2.1 -2.1z" fill="#8c8c8c" stroke="none" stroke-width="1" />
<path d="M62.550000000000004 550.1 v4.2 l2.1 -2.1z" fill="#8c8c8c" stroke="none" stroke-width="1" />
<line x1="66.60" y1="550.10" x2="66.60" y2="554.30" stroke="#8c8c8c" stroke-width="0.9" />
<path d="M68 547.2 L99.6 547.2 L95.6 557 L71.6 557z" fill="#3b3b3b" stroke="none" stroke-width="1" />
<text x="74.60" y="554.86" font-size="6.6" fill="#c828c8" text-anchor="start" textLength="18.40" lengthAdjust="spacingAndGlyphs" >Model</text>
<path d="M99.6 547.2 L133 547.2 L129 557 L95.6 557z" fill="#d0d0d0" stroke="none" stroke-width="1" />
<path d="M133 547.2 L129 557" fill="none" stroke="#202020" stroke-width="0.9" />
<path d="M133 547.2 L165 547.2 L161.5 557 L129 557z" fill="#d0d0d0" stroke="none" stroke-width="1" />
<path d="M165 547.2 L161.5 557" fill="none" stroke="#202020" stroke-width="0.9" />
<text x="102.60" y="554.86" font-size="6.6" fill="#101010" text-anchor="start" textLength="22.40" lengthAdjust="spacingAndGlyphs" >Layout1</text>
<text x="135.40" y="554.86" font-size="6.6" fill="#101010" text-anchor="start" textLength="22.90" lengthAdjust="spacingAndGlyphs" >Layout2</text>
<rect x="658.00" y="547.20" width="317.30" height="10.00" fill="#e2e2e2" />
<rect x="655.00" y="547.20" width="3.00" height="10.00" fill="#c0c0c0" />
<line x1="655.00" y1="547.70" x2="658.00" y2="547.70" stroke="#ffffff" stroke-width="1" />
<line x1="655.50" y1="547.20" x2="655.50" y2="557.20" stroke="#ffffff" stroke-width="1" />
<line x1="655.00" y1="556.70" x2="658.00" y2="556.70" stroke="#404040" stroke-width="1" />
<line x1="657.50" y1="547.20" x2="657.50" y2="557.20" stroke="#404040" stroke-width="1" />
<rect x="658.00" y="547.20" width="7.60" height="10.00" fill="#c0c0c0" />
<line x1="658.00" y1="547.70" x2="665.60" y2="547.70" stroke="#ffffff" stroke-width="1" />
<line x1="658.50" y1="547.20" x2="658.50" y2="557.20" stroke="#ffffff" stroke-width="1" />
<line x1="658.00" y1="556.70" x2="665.60" y2="556.70" stroke="#404040" stroke-width="1" />
<line x1="665.10" y1="547.20" x2="665.10" y2="557.20" stroke="#404040" stroke-width="1" />
<path d="M662.45 550.5 v3.4 l-1.7 -1.7z" fill="#000" stroke="none" stroke-width="1" />
<rect x="967.60" y="547.20" width="7.70" height="10.00" fill="#c0c0c0" />
<line x1="967.60" y1="547.70" x2="975.30" y2="547.70" stroke="#ffffff" stroke-width="1" />
<line x1="968.10" y1="547.20" x2="968.10" y2="557.20" stroke="#ffffff" stroke-width="1" />
<line x1="967.60" y1="556.70" x2="975.30" y2="556.70" stroke="#404040" stroke-width="1" />
<line x1="974.80" y1="547.20" x2="974.80" y2="557.20" stroke="#404040" stroke-width="1" />
<path d="M970.75 550.5 v3.4 l1.7 -1.7z" fill="#000" stroke="none" stroke-width="1" />
<rect x="815.50" y="547.20" width="7.50" height="10.00" fill="#c0c0c0" />
<line x1="815.50" y1="547.70" x2="823.00" y2="547.70" stroke="#ffffff" stroke-width="1" />
<line x1="816.00" y1="547.20" x2="816.00" y2="557.20" stroke="#ffffff" stroke-width="1" />
<line x1="815.50" y1="556.70" x2="823.00" y2="556.70" stroke="#404040" stroke-width="1" />
<line x1="822.50" y1="547.20" x2="822.50" y2="557.20" stroke="#404040" stroke-width="1" />
<rect x="975.30" y="547.20" width="8.20" height="10.00" fill="#c0c0c0" />
<line x1="0.00" y1="557.60" x2="985.00" y2="557.60" stroke="#f4f4f4" stroke-width="0.9" />
<line x1="0.00" y1="559.60" x2="1000.00" y2="559.60" stroke="#f4f4f4" stroke-width="0.8" />
<line x1="0.00" y1="561.30" x2="1000.00" y2="561.30" stroke="#282828" stroke-width="1.0" />
<line x1="3.30" y1="564.00" x2="3.30" y2="592.00" stroke="#f4f4f4" stroke-width="0.9" />
<line x1="4.20" y1="564.00" x2="4.20" y2="592.00" stroke="#8a8a8a" stroke-width="0.7" />
<line x1="5.30" y1="564.00" x2="5.30" y2="592.00" stroke="#f4f4f4" stroke-width="0.9" />
<line x1="6.20" y1="564.00" x2="6.20" y2="592.00" stroke="#8a8a8a" stroke-width="0.7" />
<rect x="10.80" y="568.40" width="976.70" height="25.00" fill="#ffff00" />
<line x1="10.60" y1="568.00" x2="10.60" y2="593.40" stroke="#404040" stroke-width="0.9" />
<line x1="10.20" y1="568.20" x2="987.50" y2="568.20" stroke="#a0a080" stroke-width="0.6" />
<line x1="10.80" y1="581.30" x2="987.50" y2="581.30" stroke="#808000" stroke-width="0.7" />
<rect x="956.30" y="581.70" width="31.20" height="11.70" fill="#e0e0e0" />
<text class="mono" x="11.6" y="576.00" font-size="7.9" fill="#b04400" stroke="#b04400" stroke-width="0.15" textLength="155.5" lengthAdjust="spacingAndGlyphs">or Autodesk licensed application.</text>
<text class="mono" x="11.6" y="590.90" font-size="7.9" fill="#b04400" stroke="#b04400" stroke-width="0.15" textLength="37.6" lengthAdjust="spacingAndGlyphs">Command:</text>
<rect x="987.50" y="568.40" width="7.70" height="6.50" fill="#c0c0c0" />
<line x1="987.50" y1="568.90" x2="995.20" y2="568.90" stroke="#ffffff" stroke-width="1" />
<line x1="988.00" y1="568.40" x2="988.00" y2="574.90" stroke="#ffffff" stroke-width="1" />
<line x1="987.50" y1="574.40" x2="995.20" y2="574.40" stroke="#404040" stroke-width="1" />
<line x1="994.70" y1="568.40" x2="994.70" y2="574.90" stroke="#404040" stroke-width="1" />
<path d="M990.0 572.25 h2.6 l-1.3 -1.3z" fill="#000" stroke="none" stroke-width="1" />
<rect x="987.50" y="574.90" width="7.70" height="6.50" fill="#c0c0c0" />
<line x1="987.50" y1="575.40" x2="995.20" y2="575.40" stroke="#ffffff" stroke-width="1" />
<line x1="988.00" y1="574.90" x2="988.00" y2="581.40" stroke="#ffffff" stroke-width="1" />
<line x1="987.50" y1="580.90" x2="995.20" y2="580.90" stroke="#404040" stroke-width="1" />
<line x1="994.70" y1="574.90" x2="994.70" y2="581.40" stroke="#404040" stroke-width="1" />
<path d="M990.0 577.5500000000001 h2.6 l-1.3 1.3z" fill="#000" stroke="none" stroke-width="1" />
<rect x="956.30" y="581.70" width="8.50" height="11.70" fill="#c0c0c0" />
<line x1="956.30" y1="582.20" x2="964.80" y2="582.20" stroke="#ffffff" stroke-width="1" />
<line x1="956.80" y1="581.70" x2="956.80" y2="593.40" stroke="#ffffff" stroke-width="1" />
<line x1="956.30" y1="592.90" x2="964.80" y2="592.90" stroke="#404040" stroke-width="1" />
<line x1="964.30" y1="581.70" x2="964.30" y2="593.40" stroke="#404040" stroke-width="1" />
<path d="M961.15 586.0 v3.0 l-1.5 -1.5z" fill="#000" stroke="none" stroke-width="1" />
<rect x="964.80" y="581.70" width="8.00" height="11.70" fill="#c0c0c0" />
<line x1="964.80" y1="582.20" x2="972.80" y2="582.20" stroke="#ffffff" stroke-width="1" />
<line x1="965.30" y1="581.70" x2="965.30" y2="593.40" stroke="#ffffff" stroke-width="1" />
<line x1="964.80" y1="592.90" x2="972.80" y2="592.90" stroke="#404040" stroke-width="1" />
<line x1="972.30" y1="581.70" x2="972.30" y2="593.40" stroke="#404040" stroke-width="1" />
<rect x="979.00" y="581.70" width="8.50" height="11.70" fill="#c0c0c0" />
<line x1="979.00" y1="582.20" x2="987.50" y2="582.20" stroke="#ffffff" stroke-width="1" />
<line x1="979.50" y1="581.70" x2="979.50" y2="593.40" stroke="#ffffff" stroke-width="1" />
<line x1="979.00" y1="592.90" x2="987.50" y2="592.90" stroke="#404040" stroke-width="1" />
<line x1="987.00" y1="581.70" x2="987.00" y2="593.40" stroke="#404040" stroke-width="1" />
<path d="M982.65 586.0 v3.0 l1.5 -1.5z" fill="#000" stroke="none" stroke-width="1" />
<line x1="0.00" y1="594.30" x2="1000.00" y2="594.30" stroke="#d8d8d8" stroke-width="0.8" />
<rect x="3.60" y="597.60" width="96.60" height="9.60" fill="#c4c4c4" />
<line x1="3.60" y1="598.10" x2="100.20" y2="598.10" stroke="#808080" stroke-width="1" />
<line x1="4.10" y1="597.60" x2="4.10" y2="607.20" stroke="#808080" stroke-width="1" />
<line x1="3.60" y1="606.70" x2="100.20" y2="606.70" stroke="#f0f0f0" stroke-width="1" />
<line x1="99.70" y1="597.60" x2="99.70" y2="607.20" stroke="#f0f0f0" stroke-width="1" />
<text x="5.40" y="604.93" font-size="6.5" fill="#8c8c8c" text-anchor="start" textLength="82.50" lengthAdjust="spacingAndGlyphs" >-828.5486, -333.3565, 0.0000</text>
<rect x="103.80" y="597.60" width="19.20" height="9.60" fill="#d2d2d2" />
<line x1="103.80" y1="598.00" x2="123.00" y2="598.00" stroke="#ececec" stroke-width="0.7" />
<line x1="104.20" y1="597.60" x2="104.20" y2="607.20" stroke="#ececec" stroke-width="0.7" />
<line x1="103.80" y1="606.90" x2="123.00" y2="606.90" stroke="#909090" stroke-width="0.7" />
<line x1="122.60" y1="597.60" x2="122.60" y2="607.20" stroke="#909090" stroke-width="0.7" />
<text x="113.40" y="604.99" font-size="6.4" fill="#101010" text-anchor="middle" textLength="14.60" lengthAdjust="spacingAndGlyphs" >SNAP</text>
<rect x="125.20" y="597.60" width="18.60" height="9.60" fill="#d2d2d2" />
<line x1="125.20" y1="598.00" x2="143.80" y2="598.00" stroke="#ececec" stroke-width="0.7" />
<line x1="125.60" y1="597.60" x2="125.60" y2="607.20" stroke="#ececec" stroke-width="0.7" />
<line x1="125.20" y1="606.90" x2="143.80" y2="606.90" stroke="#909090" stroke-width="0.7" />
<line x1="143.40" y1="597.60" x2="143.40" y2="607.20" stroke="#909090" stroke-width="0.7" />
<text x="134.50" y="604.99" font-size="6.4" fill="#101010" text-anchor="middle" textLength="14.00" lengthAdjust="spacingAndGlyphs" >GRID</text>
<rect x="146.40" y="597.60" width="25.40" height="9.60" fill="#d6d6d6" />
<line x1="146.40" y1="598.10" x2="171.80" y2="598.10" stroke="#484848" stroke-width="1" />
<line x1="146.90" y1="597.60" x2="146.90" y2="607.20" stroke="#484848" stroke-width="1" />
<line x1="147.40" y1="606.80" x2="171.80" y2="606.80" stroke="#f6f6f6" stroke-width="0.8" />
<line x1="171.40" y1="598.60" x2="171.40" y2="607.20" stroke="#f6f6f6" stroke-width="0.8" />
<text x="159.10" y="604.99" font-size="6.4" fill="#101010" text-anchor="middle" textLength="20.80" lengthAdjust="spacingAndGlyphs" >ORTHO</text>
<rect x="174.30" y="597.60" width="24.10" height="9.60" fill="#d2d2d2" />
<line x1="174.30" y1="598.00" x2="198.40" y2="598.00" stroke="#ececec" stroke-width="0.7" />
<line x1="174.70" y1="597.60" x2="174.70" y2="607.20" stroke="#ececec" stroke-width="0.7" />
<line x1="174.30" y1="606.90" x2="198.40" y2="606.90" stroke="#909090" stroke-width="0.7" />
<line x1="198.00" y1="597.60" x2="198.00" y2="607.20" stroke="#909090" stroke-width="0.7" />
<text x="186.35" y="604.99" font-size="6.4" fill="#101010" text-anchor="middle" textLength="19.50" lengthAdjust="spacingAndGlyphs" >POLAR</text>
<rect x="201.00" y="597.60" width="24.80" height="9.60" fill="#d6d6d6" />
<line x1="201.00" y1="598.10" x2="225.80" y2="598.10" stroke="#484848" stroke-width="1" />
<line x1="201.50" y1="597.60" x2="201.50" y2="607.20" stroke="#484848" stroke-width="1" />
<line x1="202.00" y1="606.80" x2="225.80" y2="606.80" stroke="#f6f6f6" stroke-width="0.8" />
<line x1="225.40" y1="598.60" x2="225.40" y2="607.20" stroke="#f6f6f6" stroke-width="0.8" />
<text x="213.40" y="604.99" font-size="6.4" fill="#101010" text-anchor="middle" textLength="20.20" lengthAdjust="spacingAndGlyphs" >OSNAP</text>
<rect x="227.60" y="597.60" width="29.00" height="9.60" fill="#d6d6d6" />
<line x1="227.60" y1="598.10" x2="256.60" y2="598.10" stroke="#484848" stroke-width="1" />
<line x1="228.10" y1="597.60" x2="228.10" y2="607.20" stroke="#484848" stroke-width="1" />
<line x1="228.60" y1="606.80" x2="256.60" y2="606.80" stroke="#f6f6f6" stroke-width="0.8" />
<line x1="256.20" y1="598.60" x2="256.20" y2="607.20" stroke="#f6f6f6" stroke-width="0.8" />
<text x="242.10" y="604.99" font-size="6.4" fill="#101010" text-anchor="middle" textLength="24.40" lengthAdjust="spacingAndGlyphs" >OTRACK</text>
<rect x="258.20" y="597.60" width="20.80" height="9.60" fill="#d2d2d2" />
<line x1="258.20" y1="598.00" x2="279.00" y2="598.00" stroke="#ececec" stroke-width="0.7" />
<line x1="258.60" y1="597.60" x2="258.60" y2="607.20" stroke="#ececec" stroke-width="0.7" />
<line x1="258.20" y1="606.90" x2="279.00" y2="606.90" stroke="#909090" stroke-width="0.7" />
<line x1="278.60" y1="597.60" x2="278.60" y2="607.20" stroke="#909090" stroke-width="0.7" />
<text x="268.60" y="604.99" font-size="6.4" fill="#101010" text-anchor="middle" textLength="16.20" lengthAdjust="spacingAndGlyphs" >DUCS</text>
<rect x="280.80" y="597.60" width="16.60" height="9.60" fill="#d2d2d2" />
<line x1="280.80" y1="598.00" x2="297.40" y2="598.00" stroke="#ececec" stroke-width="0.7" />
<line x1="281.20" y1="597.60" x2="281.20" y2="607.20" stroke="#ececec" stroke-width="0.7" />
<line x1="280.80" y1="606.90" x2="297.40" y2="606.90" stroke="#909090" stroke-width="0.7" />
<line x1="297.00" y1="597.60" x2="297.00" y2="607.20" stroke="#909090" stroke-width="0.7" />
<text x="289.10" y="604.99" font-size="6.4" fill="#101010" text-anchor="middle" textLength="12.00" lengthAdjust="spacingAndGlyphs" >DYN</text>
<rect x="299.20" y="597.60" width="16.80" height="9.60" fill="#d2d2d2" />
<line x1="299.20" y1="598.00" x2="316.00" y2="598.00" stroke="#ececec" stroke-width="0.7" />
<line x1="299.60" y1="597.60" x2="299.60" y2="607.20" stroke="#ececec" stroke-width="0.7" />
<line x1="299.20" y1="606.90" x2="316.00" y2="606.90" stroke="#909090" stroke-width="0.7" />
<line x1="315.60" y1="597.60" x2="315.60" y2="607.20" stroke="#909090" stroke-width="0.7" />
<text x="307.60" y="604.99" font-size="6.4" fill="#101010" text-anchor="middle" textLength="12.20" lengthAdjust="spacingAndGlyphs" >LWT</text>
<rect x="317.80" y="597.60" width="26.20" height="9.60" fill="#d6d6d6" />
<line x1="317.80" y1="598.10" x2="344.00" y2="598.10" stroke="#484848" stroke-width="1" />
<line x1="318.30" y1="597.60" x2="318.30" y2="607.20" stroke="#484848" stroke-width="1" />
<line x1="318.80" y1="606.80" x2="344.00" y2="606.80" stroke="#f6f6f6" stroke-width="0.8" />
<line x1="343.60" y1="598.60" x2="343.60" y2="607.20" stroke="#f6f6f6" stroke-width="0.8" />
<text x="330.90" y="604.99" font-size="6.4" fill="#101010" text-anchor="middle" textLength="21.60" lengthAdjust="spacingAndGlyphs" >MODEL</text>
<text x="845.00" y="604.73" font-size="6.5" fill="#202020" text-anchor="start" textLength="49.50" lengthAdjust="spacingAndGlyphs" >Annotation Scale:</text>
<text x="900.00" y="604.73" font-size="6.5" fill="#202020" text-anchor="start" textLength="8.80" lengthAdjust="spacingAndGlyphs" >1:1</text>
<path d="M912.1 601.95 h3.0 l-1.5 1.5z" fill="#000" stroke="none" stroke-width="1" />
<path d="M924 605.5 l2 -4 l1.8 4z M927.6 605.5 l1.5 -3 l1.5 3z" fill="none" stroke="#4068b0" stroke-width="0.8" />
<circle cx="929.40" cy="599.60" r="1.4" fill="#f0e040" stroke="#c0b020" stroke-width="0.4"/>
<path d="M938.5 605.5 l1.6 -3.4 l1.6 3.4z" fill="none" stroke="#a8a8a8" stroke-width="0.8" />
<path d="M941.5 601.5 l2.3 -3" fill="none" stroke="#b8b8b8" stroke-width="1" />
<rect x="949.8" y="597.5" width="25" height="10" fill="#cccccc" stroke="#e8e8e8" stroke-width="0.7"/>
<line x1="949.80" y1="597.50" x2="949.80" y2="607.50" stroke="#808080" stroke-width="0.7" />
<line x1="949.80" y1="597.50" x2="974.80" y2="597.50" stroke="#808080" stroke-width="0.7" />
<rect x="952.80" y="601.30" width="5.60" height="4.60" rx="0" fill="#e0c820" stroke="#706010" stroke-width="0.6"/>
<path d="M955 601.3 v-1.2 a1.8 1.8 0 0 1 3.6 0 v.4" fill="none" stroke="#807018" stroke-width="1" />
<rect x="963.60" y="598.60" width="3.40" height="7.40" rx="0" fill="#4878b8" stroke="#284878" stroke-width="0.5"/>
<circle cx="968.80" cy="603.80" r="2.2" fill="#38a848" stroke="#207830" stroke-width="0.5"/>
<path d="M966 599 h3.4" fill="none" stroke="#d8e8f8" stroke-width="0.8" />
<path d="M978.9000000000001 602.1 h3.6 l-1.8 1.8z" fill="#000" stroke="none" stroke-width="1" />
<rect x="988.20" y="597.60" width="9.40" height="8.80" rx="0" fill="#a8c8e8" stroke="#4070b0" stroke-width="0.9"/>
<line x1="0.00" y1="608.40" x2="1000.00" y2="608.40" stroke="#f4f4f4" stroke-width="0.9" />
<rect x="1.60" y="611.00" width="29.00" height="12.20" fill="#c0c0c0" />
<line x1="1.60" y1="611.50" x2="30.60" y2="611.50" stroke="#ffffff" stroke-width="1" />
<line x1="2.10" y1="611.00" x2="2.10" y2="623.20" stroke="#ffffff" stroke-width="1" />
<line x1="1.60" y1="622.70" x2="30.60" y2="622.70" stroke="#404040" stroke-width="1" />
<line x1="30.10" y1="611.00" x2="30.10" y2="623.20" stroke="#404040" stroke-width="1" />
<rect x="4.00" y="613.60" width="2.60" height="2.60" rx="0" fill="#e04828" stroke="none" stroke-width="1"/>
<rect x="7.00" y="613.90" width="2.60" height="2.60" rx="0" fill="#40a838" stroke="none" stroke-width="1"/>
<rect x="3.70" y="616.90" width="2.60" height="2.60" rx="0" fill="#3868d0" stroke="none" stroke-width="1"/>
<rect x="6.70" y="617.20" width="2.60" height="2.60" rx="0" fill="#e8c020" stroke="none" stroke-width="1"/>
<text x="12.60" y="619.80" font-size="6.7" fill="#000" text-anchor="start" font-weight="bold" textLength="16.40" lengthAdjust="spacingAndGlyphs" >Start</text>
<rect x="34.30" y="611.00" width="94.20" height="12.20" fill="#c0c0c0" />
<line x1="34.30" y1="611.50" x2="128.50" y2="611.50" stroke="#ffffff" stroke-width="1" />
<line x1="34.80" y1="611.00" x2="34.80" y2="623.20" stroke="#ffffff" stroke-width="1" />
<line x1="34.30" y1="622.70" x2="128.50" y2="622.70" stroke="#404040" stroke-width="1" />
<line x1="128.00" y1="611.00" x2="128.00" y2="623.20" stroke="#404040" stroke-width="1" />
<circle cx="40.60" cy="617.20" r="2.9" fill="#e86820" stroke="#b84810" stroke-width="0.4"/>
<path d="M38.4 616 a2.4 2.4 0 0 1 4.4 .6 q-1.4 -.9 -2.8 .3z" fill="#3858b0" stroke="none" stroke-width="1" />
<text x="47.30" y="619.63" font-size="6.5" fill="#101010" text-anchor="start" textLength="76.70" lengthAdjust="spacingAndGlyphs" >CAD: How difficult is it for ...</text>
<rect x="131.30" y="611.00" width="94.00" height="12.20" fill="#e6e6e6" />
<line x1="131.30" y1="611.40" x2="225.30" y2="611.40" stroke="#404040" stroke-width="0.9" />
<line x1="131.70" y1="611.00" x2="131.70" y2="623.20" stroke="#404040" stroke-width="0.9" />
<line x1="131.30" y1="622.80" x2="225.30" y2="622.80" stroke="#fafafa" stroke-width="0.8" />
<line x1="224.90" y1="611.00" x2="224.90" y2="623.20" stroke="#fafafa" stroke-width="0.8" />
<rect x="135.20" y="613.50" width="6.80" height="7.40" rx="0" fill="#189888" stroke="none" stroke-width="1"/>
<path d="M136.4 619.8 l1.3 -4.6 l1.3 4.6 M140 619.8 v-5.4" fill="none" stroke="#e4fffc" stroke-width="0.7" />
<text x="146.40" y="619.80" font-size="6.7" fill="#000" text-anchor="start" font-weight="bold" textLength="75.40" lengthAdjust="spacingAndGlyphs" >AutoCAD 2008 - [C:\...</text>
<rect x="228.80" y="611.00" width="93.80" height="12.20" fill="#c0c0c0" />
<line x1="228.80" y1="611.50" x2="322.60" y2="611.50" stroke="#ffffff" stroke-width="1" />
<line x1="229.30" y1="611.00" x2="229.30" y2="623.20" stroke="#ffffff" stroke-width="1" />
<line x1="228.80" y1="622.70" x2="322.60" y2="622.70" stroke="#404040" stroke-width="1" />
<line x1="322.10" y1="611.00" x2="322.10" y2="623.20" stroke="#404040" stroke-width="1" />
<circle cx="234.60" cy="617.20" r="2.9" fill="#d05838" stroke="#904020" stroke-width="0.4"/>
<circle cx="235.40" cy="616.40" r="1.4" fill="#f0d040" stroke="none" stroke-width="1"/>
<text x="241.20" y="619.63" font-size="6.5" fill="#101010" text-anchor="start" textLength="75.00" lengthAdjust="spacingAndGlyphs" >Jasc Paint Shop Pro - CA...</text>
<rect x="909.20" y="611.40" width="88.80" height="11.40" fill="#c0c0c0" />
<line x1="909.20" y1="611.90" x2="998.00" y2="611.90" stroke="#808080" stroke-width="1" />
<line x1="909.70" y1="611.40" x2="909.70" y2="622.80" stroke="#808080" stroke-width="1" />
<line x1="909.20" y1="622.30" x2="998.00" y2="622.30" stroke="#f4f4f4" stroke-width="1" />
<line x1="997.50" y1="611.40" x2="997.50" y2="622.80" stroke="#f4f4f4" stroke-width="1" />
<rect x="911.40" y="613.40" width="7.20" height="6.60" rx="0" fill="#3868c0" stroke="#203870" stroke-width="0.5"/>
<rect x="912.30" y="614.40" width="5.40" height="2.00" rx="0" fill="#a8c8f0" stroke="none" stroke-width="1"/>
<circle cx="925.80" cy="616.40" r="2.2" fill="#3888d0" stroke="none" stroke-width="1"/>
<circle cx="928.00" cy="618.60" r="2.2" fill="#38a840" stroke="none" stroke-width="1"/>
<circle cx="928.60" cy="620.00" r="1.7" fill="#e03020" stroke="none" stroke-width="1"/>
<rect x="933.60" y="613.20" width="7.40" height="8.00" rx="1.2" fill="#d82020" stroke="#901010" stroke-width="0.4"/>
<text x="937.30" y="619.59" font-size="6.4" fill="#fff" text-anchor="middle" font-weight="bold" >C</text>
<rect x="943.60" y="613.40" width="8.00" height="7.80" rx="0" fill="#2c8c4c" stroke="none" stroke-width="1"/>
<path d="M947.6 614.2 l3.4 6.2 h-6.8z" fill="#f0a020" stroke="#c04010" stroke-width="0.5" />
<circle cx="956.00" cy="616.00" r="2.4" fill="#38a048" stroke="none" stroke-width="1"/>
<circle cx="959.60" cy="618.60" r="2.6" fill="#e8eef4" stroke="#a0a8b0" stroke-width="0.4"/>
<path d="M954.4 618.8 l2.4 2.2 l1.4 -3z" fill="#207838" stroke="none" stroke-width="1" />
<path d="M965.6 614.6 l6.6 1.4 v4.6 l-6.6 -1.6z" fill="#a8c880" stroke="#88a860" stroke-width="0.4" />
<text x="978.00" y="619.70" font-size="6.7" fill="#101010" text-anchor="start" textLength="15.40" lengthAdjust="spacingAndGlyphs" >01:54</text>
<rect x="31.00" y="56.00" width="944.30" height="491.20" fill="#3b3b3b" />
<g fill="none" stroke="#ffffff" stroke-width="0.78" stroke-linecap="butt">
<path d="M323.51 88.99 L330.65 88.99" />
<path d="M323.51 108.63 L330.65 108.63" />
<path d="M323.51 128.87 L330.65 128.87" />
<path d="M336.61 88.99 L490.18 88.99" />
<path d="M336.61 108.63 L490.18 108.63" />
<path d="M336.61 128.87 L490.18 128.87" />
<circle cx="333.63" cy="88.99" r="3" fill="#3b3b3b"/>
<circle cx="333.63" cy="88.99" r="1.45" fill="#ffffff" stroke="none"/>
<circle cx="333.63" cy="108.63" r="3" fill="#3b3b3b"/>
<circle cx="333.63" cy="108.63" r="1.45" fill="#ffffff" stroke="none"/>
<circle cx="333.63" cy="128.87" r="3" fill="#3b3b3b"/>
<circle cx="333.63" cy="128.87" r="1.45" fill="#ffffff" stroke="none"/>
<path d="M323.51 150.89 L330.65 150.89" />
<path d="M336.61 150.89 L344.35 150.89 L344.35 172.32" />
<circle cx="333.63" cy="150.89" r="3" fill="#3b3b3b"/>
<circle cx="333.63" cy="150.89" r="1.45" fill="#ffffff" stroke="none"/>
<path d="M339.58 172.32 L349.11 172.32" />
<path d="M342.56 172.32 L341.37 174.11" stroke-width="0.6"/>
<path d="M345.54 172.32 L343.75 174.11" stroke-width="0.6"/>
<path d="M347.92 172.32 L346.73 174.11" stroke-width="0.6"/>
<path d="M423.51 88.99 L423.51 242.56 L490.18 242.56" />
<path d="M397.32 108.63 L397.32 262.80 L490.18 262.80" />
<path d="M371.13 128.87 L371.13 407.44" />
<path d="M371.13 423.51 L371.13 455.06 L412.20 455.06" />
<path d="M371.13 282.44 L490.18 282.44" />
<path d="M490.18 69.35 L447.32 69.35 L447.32 455.06" />
<path d="M463.39 88.99 L463.39 302.08" />
<path d="M447.32 222.92 L490.18 222.92" />
<path d="M463.39 148.51 L491.96 148.51" />
<path d="M509.82 148.51 L538.99 148.51" />
<path d="M560.42 148.51 L602.68 148.51" />
<path d="M390.18 455.06 L390.18 357.44" />
<path d="M390.18 341.37 L390.18 302.08 L491.96 302.08" />
<path d="M509.82 302.08 L521.13 302.08" />
<path d="M527.08 302.08 L538.99 302.08" />
<path d="M560.42 302.08 L581.85 302.08" />
<path d="M510.42 69.35 L602.68 69.35 L602.68 435.42 L569.35 435.42" />
<path d="M555.06 435.42 L487.20 435.42 L487.20 455.06" />
<path d="M510.42 222.92 L581.85 222.92 L581.85 455.06 L569.94 455.06" />
<circle cx="492.56" cy="69.35" r="2.7" fill="none"/>
<circle cx="508.04" cy="69.35" r="2.7" fill="none"/>
<circle cx="492.56" cy="88.99" r="2.7" fill="none"/>
<circle cx="508.04" cy="88.99" r="2.7" fill="none"/>
<circle cx="492.56" cy="108.63" r="2.7" fill="none"/>
<circle cx="508.04" cy="108.63" r="2.7" fill="none"/>
<circle cx="492.56" cy="128.87" r="2.7" fill="none"/>
<circle cx="508.04" cy="128.87" r="2.7" fill="none"/>
<path d="M510.42 88.99 L547.32 88.99 L547.32 80.65 L552.08 80.65 L552.08 88.99 L554.46 88.99" />
<circle cx="557.44" cy="88.99" r="2.6" fill="none"/>
<path d="M510.42 108.63 L547.32 108.63 L547.32 100.30 L552.08 100.30 L552.08 108.63 L554.46 108.63" />
<circle cx="557.44" cy="108.63" r="2.6" fill="none"/>
<path d="M510.42 128.87 L547.32 128.87 L547.32 120.54 L552.08 120.54 L552.08 128.87 L554.46 128.87" />
<circle cx="557.44" cy="128.87" r="2.6" fill="none"/>
<rect x="491.8" y="140.60" width="17.8" height="10.4"/>
<path d="M491.96 150.89 L509.82 140.77" />
<circle cx="541.96" cy="148.51" r="2.6" fill="none"/>
<circle cx="557.44" cy="148.51" r="2.6" fill="none"/>
<path d="M500.30 61.01 L500.30 140.77" stroke-dasharray="8.3 1.6" stroke-dashoffset="-3.6"/>
<path d="M549.70 80.06 L549.70 169.94" stroke-dasharray="8.3 1.6" stroke-dashoffset="-3.6"/>
<path d="M544.35 184.82 L546.73 184.82 L546.73 177.08 L552.68 177.08 L552.68 184.82 L555.06 184.82" />
<circle cx="492.56" cy="222.92" r="2.7" fill="none"/>
<circle cx="508.04" cy="222.92" r="2.7" fill="none"/>
<circle cx="492.56" cy="242.56" r="2.7" fill="none"/>
<circle cx="508.04" cy="242.56" r="2.7" fill="none"/>
<circle cx="492.56" cy="262.80" r="2.7" fill="none"/>
<circle cx="508.04" cy="262.80" r="2.7" fill="none"/>
<circle cx="492.56" cy="282.44" r="2.7" fill="none"/>
<circle cx="508.04" cy="282.44" r="2.7" fill="none"/>
<path d="M510.42 242.56 L547.32 242.56 L547.32 234.23 L552.08 234.23 L552.08 242.56 L554.46 242.56" />
<circle cx="557.44" cy="242.56" r="2.6" fill="none"/>
<path d="M510.42 262.80 L547.32 262.80 L547.32 254.46 L552.08 254.46 L552.08 262.80 L554.46 262.80" />
<circle cx="557.44" cy="262.80" r="2.6" fill="none"/>
<path d="M510.42 282.44 L547.32 282.44 L547.32 274.11 L552.08 274.11 L552.08 282.44 L554.46 282.44" />
<circle cx="557.44" cy="282.44" r="2.6" fill="none"/>
<rect x="491.8" y="294.10" width="17.8" height="10.4"/>
<path d="M491.96 304.46 L509.82 294.35" />
<circle cx="541.96" cy="302.08" r="2.6" fill="none"/>
<circle cx="557.44" cy="302.08" r="2.6" fill="none"/>
<path d="M500.30 214.58 L500.30 294.35" stroke-dasharray="8.3 1.6" stroke-dashoffset="-3.6"/>
<path d="M549.70 233.63 L549.70 323.51" stroke-dasharray="8.3 1.6" stroke-dashoffset="-3.6"/>
<path d="M544.35 338.39 L546.73 338.39 L546.73 330.65 L552.68 330.65 L552.68 338.39 L555.06 338.39" />
<circle cx="665.18" cy="108.63" r="16.8" fill="none"/>
<path d="M559.82 88.99 L651.49 88.99 L659.23 93.15" />
<path d="M559.82 108.63 L648.51 108.63" />
<path d="M559.82 128.87 L651.49 128.87 L659.23 124.11" />
<path d="M681.85 108.63 L691.96 108.63" />
<path d="M697.92 108.63 L708.63 108.63 L708.63 130.65" />
<circle cx="694.94" cy="108.63" r="3" fill="#3b3b3b"/>
<circle cx="694.94" cy="108.63" r="1.45" fill="#ffffff" stroke="none"/>
<path d="M704.46 130.65 L713.39 130.65" />
<path d="M706.85 130.65 L705.65 132.44" stroke-width="0.6"/>
<path d="M709.82 130.65 L708.63 132.44" stroke-width="0.6"/>
<path d="M712.80 130.65 L711.01 132.44" stroke-width="0.6"/>
<circle cx="665.18" cy="262.80" r="16.8" fill="none"/>
<path d="M559.82 242.56 L651.49 242.56 L659.23 247.32" />
<path d="M559.82 262.80 L648.51 262.80" />
<path d="M559.82 282.44 L651.49 282.44 L659.23 277.68" />
<path d="M681.85 262.80 L691.96 262.80" />
<path d="M697.92 262.80 L708.63 262.80 L708.63 284.23" />
<circle cx="694.94" cy="262.80" r="3" fill="#3b3b3b"/>
<circle cx="694.94" cy="262.80" r="1.45" fill="#ffffff" stroke="none"/>
<path d="M704.46 284.23 L713.39 284.23" />
<path d="M706.85 284.23 L705.65 286.01" stroke-width="0.6"/>
<path d="M709.82 284.23 L708.63 286.01" stroke-width="0.6"/>
<path d="M712.80 284.23 L711.01 286.01" stroke-width="0.6"/>
<rect x="387.4" y="341.4" width="5.2" height="15.8"/>
<path d="M388.39 356.85 L388.99 341.96 L391.37 356.85 L391.96 341.96" stroke-width="0.6"/>
<rect x="397.4" y="341.4" width="5.2" height="15.8"/>
<path d="M398.51 356.85 L399.11 341.96 L401.49 356.85 L402.08 341.96" stroke-width="0.6"/>
<rect x="393.1" y="340.3" width="3.7" height="18.4" fill="#a8a8a8" stroke="none"/>
<path d="M399.70 341.37 L399.70 335.42 L413.99 335.42 L413.99 342.56" />
<path d="M399.70 357.44 L399.70 363.99 L413.99 363.99 L413.99 356.25" />
<circle cx="413.99" cy="349.11" r="6.5" fill="none"/>
<path d="M409.82 344.94 L418.75 353.87" />
<path d="M418.75 344.94 L409.82 353.87" />
<rect x="368.3" y="407.5" width="5.6" height="15.8"/>
<path d="M369.35 409.82 L372.92 409.82" stroke-width="0.6"/>
<path d="M369.35 421.13 L372.92 421.13" stroke-width="0.6"/>
<path d="M371.13 409.82 L371.13 415.77 L372.32 418.75 L371.13 421.13" stroke-width="0.6"/>
<circle cx="371.13" cy="372.32" r="3" fill="#3b3b3b"/>
<circle cx="371.13" cy="372.32" r="1.45" fill="#ffffff" stroke="none"/>
<circle cx="581.85" cy="372.32" r="3" fill="#3b3b3b"/>
<circle cx="581.85" cy="372.32" r="1.45" fill="#ffffff" stroke="none"/>
<circle cx="602.68" cy="372.32" r="3" fill="#3b3b3b"/>
<circle cx="602.68" cy="372.32" r="1.45" fill="#ffffff" stroke="none"/>
<circle cx="524.11" cy="302.08" r="3" fill="#3b3b3b"/>
<circle cx="524.11" cy="302.08" r="1.45" fill="#ffffff" stroke="none"/>
<circle cx="661.61" cy="442.56" r="3" fill="#3b3b3b"/>
<circle cx="661.61" cy="442.56" r="1.45" fill="#ffffff" stroke="none"/>
<path d="M425.89 455.06 L457.44 455.06" />
<path d="M418.75 455.06 L418.75 469.35" />
<path d="M412 469.2 h14 a7 7.4 0 0 1 -14 0z"/>
<circle cx="413.39" cy="456.25" r="0.9" fill="none"/>
<circle cx="424.70" cy="456.25" r="0.9" fill="none"/>
<circle cx="458.63" cy="455.06" r="1.25" fill="none"/>
<circle cx="469.94" cy="455.06" r="1.25" fill="none"/>
<circle cx="504.46" cy="455.06" r="1.25" fill="none"/>
<circle cx="516.37" cy="455.06" r="1.25" fill="none"/>
<circle cx="556.25" cy="455.06" r="1.25" fill="none"/>
<circle cx="568.15" cy="455.06" r="1.25" fill="none"/>
<circle cx="556.85" cy="435.42" r="1.25" fill="none"/>
<circle cx="568.15" cy="435.42" r="1.25" fill="none"/>
<path d="M471.73 455.06 L503.27 455.06" />
<path d="M517.56 455.06 L527.68 455.06 L527.68 397.32 L581.85 397.32" />
<path d="M537.20 435.42 L537.20 455.06 L555.06 455.06" />
<path d="M562.20 439.58 L562.20 458.04" stroke-dasharray="5 1.5"/>
<circle cx="519.35" cy="505.06" r="2.9" fill="none"/>
<circle cx="537.20" cy="498.51" r="2.9" fill="none"/>
<circle cx="555.65" cy="505.06" r="2.9" fill="none"/>
<circle cx="537.20" cy="534.82" r="2.9" fill="none"/>
<path d="M537.20 501.49 L537.20 531.85" />
<path d="M447.32 86.29 L449.32 88.99 L447.32 91.69" stroke-width="0.8"/>
<path d="M447.32 105.93 L449.32 108.63 L447.32 111.33" stroke-width="0.8"/>
<path d="M447.32 126.17 L449.32 128.87 L447.32 131.57" stroke-width="0.8"/>
<path d="M463.39 105.93 L465.39 108.63 L463.39 111.33" stroke-width="0.8"/>
<path d="M463.39 126.17 L465.39 128.87 L463.39 131.57" stroke-width="0.8"/>
<path d="M602.68 86.29 L604.68 88.99 L602.68 91.69" stroke-width="0.8"/>
<path d="M602.68 105.93 L604.68 108.63 L602.68 111.33" stroke-width="0.8"/>
<path d="M602.68 126.17 L604.68 128.87 L602.68 131.57" stroke-width="0.8"/>
<path d="M463.39 220.22 L465.39 222.92 L463.39 225.62" stroke-width="0.8"/>
<path d="M447.32 239.86 L449.32 242.56 L447.32 245.26" stroke-width="0.8"/>
<path d="M463.39 239.86 L465.39 242.56 L463.39 245.26" stroke-width="0.8"/>
<path d="M581.85 239.86 L583.85 242.56 L581.85 245.26" stroke-width="0.8"/>
<path d="M602.68 239.86 L604.68 242.56 L602.68 245.26" stroke-width="0.8"/>
<path d="M447.32 260.10 L449.32 262.80 L447.32 265.50" stroke-width="0.8"/>
<path d="M463.39 260.10 L465.39 262.80 L463.39 265.50" stroke-width="0.8"/>
<path d="M581.85 260.10 L583.85 262.80 L581.85 265.50" stroke-width="0.8"/>
<path d="M602.68 260.10 L604.68 262.80 L602.68 265.50" stroke-width="0.8"/>
<path d="M447.32 279.74 L449.32 282.44 L447.32 285.14" stroke-width="0.8"/>
<path d="M463.39 279.74 L465.39 282.44 L463.39 285.14" stroke-width="0.8"/>
<path d="M581.85 279.74 L583.85 282.44 L581.85 285.14" stroke-width="0.8"/>
<path d="M602.68 279.74 L604.68 282.44 L602.68 285.14" stroke-width="0.8"/>
<path d="M447.32 299.38 L449.32 302.08 L447.32 304.78" stroke-width="0.8"/>
<path d="M397.32 126.17 L399.32 128.87 L397.32 131.57" stroke-width="0.8"/>
<path d="M423.51 105.93 L425.51 108.63 L423.51 111.33" stroke-width="0.8"/>
<path d="M423.51 126.17 L425.51 128.87 L423.51 131.57" stroke-width="0.8"/>
<path d="M527.68 432.72 L529.68 435.42 L527.68 438.12" stroke-width="0.8"/>
<path d="M581.85 432.72 L583.85 435.42 L581.85 438.12" stroke-width="0.8"/>
</g>
<g fill="#ffffff">
<rect x="490.00" y="61.20" width="20.70" height="3.10" fill="#fff" />
<rect x="490.00" y="80.70" width="20.70" height="3.10" fill="#fff" />
<rect x="490.00" y="100.50" width="20.70" height="3.10" fill="#fff" />
<rect x="490.00" y="120.50" width="20.70" height="3.10" fill="#fff" />
<rect x="539.60" y="143.30" width="20.60" height="2.90" fill="#fff" />
<rect x="490.00" y="214.70" width="20.70" height="3.10" fill="#fff" />
<rect x="490.00" y="234.50" width="20.70" height="3.10" fill="#fff" />
<rect x="490.00" y="254.40" width="20.70" height="3.10" fill="#fff" />
<rect x="490.00" y="274.20" width="20.70" height="3.10" fill="#fff" />
<rect x="539.60" y="296.80" width="20.60" height="2.90" fill="#fff" />
<rect x="412.00" y="452.70" width="14.00" height="1.90" fill="#f4f4f4" />
<rect x="412.00" y="453.00" width="1.00" height="3.00" fill="#e0e0e0" />
<rect x="425.00" y="453.00" width="1.00" height="3.00" fill="#e0e0e0" />
<rect x="457.00" y="457.70" width="14.60" height="2.00" fill="#e8e8e8" />
<rect x="503.00" y="457.70" width="14.60" height="2.00" fill="#e8e8e8" />
<rect x="555.20" y="457.70" width="14.60" height="2.00" fill="#e8e8e8" />
<rect x="555.20" y="438.00" width="14.60" height="2.00" fill="#e8e8e8" />
</g>
<g>
<circle cx="423.51" cy="88.99" r="1.75" fill="#ffffff" stroke="none"/>
<circle cx="397.32" cy="108.63" r="1.75" fill="#ffffff" stroke="none"/>
<circle cx="371.13" cy="128.87" r="1.75" fill="#ffffff" stroke="none"/>
<circle cx="463.39" cy="88.99" r="1.75" fill="#ffffff" stroke="none"/>
<circle cx="463.39" cy="148.51" r="1.75" fill="#ffffff" stroke="none"/>
<circle cx="602.68" cy="148.51" r="1.75" fill="#ffffff" stroke="none"/>
<circle cx="447.32" cy="222.92" r="1.75" fill="#ffffff" stroke="none"/>
<circle cx="371.13" cy="282.44" r="1.75" fill="#ffffff" stroke="none"/>
<circle cx="463.39" cy="302.08" r="1.75" fill="#ffffff" stroke="none"/>
<circle cx="581.85" cy="302.08" r="1.75" fill="#ffffff" stroke="none"/>
<circle cx="390.18" cy="455.06" r="1.75" fill="#ffffff" stroke="none"/>
<circle cx="447.32" cy="455.06" r="1.75" fill="#ffffff" stroke="none"/>
<circle cx="487.20" cy="455.06" r="1.75" fill="#ffffff" stroke="none"/>
<circle cx="537.20" cy="435.42" r="1.75" fill="#ffffff" stroke="none"/>
<circle cx="581.85" cy="397.32" r="1.75" fill="#ffffff" stroke="none"/>
</g>
<text x="311.00" y="92.52" font-size="9.0" fill="#f0f0f0" text-anchor="start" textLength="7.20" lengthAdjust="spacingAndGlyphs" >L1</text>
<text x="311.00" y="112.22" font-size="9.0" fill="#f0f0f0" text-anchor="start" textLength="7.60" lengthAdjust="spacingAndGlyphs" >L2</text>
<text x="311.00" y="132.22" font-size="9.0" fill="#f0f0f0" text-anchor="start" textLength="7.60" lengthAdjust="spacingAndGlyphs" >L3</text>
<text x="311.00" y="154.22" font-size="9.0" fill="#f0f0f0" text-anchor="start" textLength="5.00" lengthAdjust="spacingAndGlyphs" >E</text>
<text x="333.40" y="84.20" font-size="5.6" fill="#f2f2f2" text-anchor="middle" >1</text>
<text x="333.40" y="104.00" font-size="5.6" fill="#f2f2f2" text-anchor="middle" >2</text>
<text x="333.40" y="124.10" font-size="5.6" fill="#f2f2f2" text-anchor="middle" >3</text>
<text x="268.80" y="113.22" font-size="9.0" fill="#f0f0f0" text-anchor="start" textLength="19.00" lengthAdjust="spacingAndGlyphs" >415V</text>
<text x="268.80" y="121.22" font-size="9.0" fill="#f0f0f0" text-anchor="start" textLength="24.20" lengthAdjust="spacingAndGlyphs" >MAINS</text>
<text x="665.60" y="141.52" font-size="9.0" fill="#f0f0f0" text-anchor="middle" textLength="35.50" lengthAdjust="spacingAndGlyphs" >COOLANT</text>
<text x="665.60" y="149.72" font-size="9.0" fill="#f0f0f0" text-anchor="middle" textLength="22.00" lengthAdjust="spacingAndGlyphs" >PUMP</text>
<text x="650.20" y="292.72" font-size="9.0" fill="#f0f0f0" text-anchor="start" textLength="32.20" lengthAdjust="spacingAndGlyphs" >SPINDLE</text>
<text x="650.20" y="301.02" font-size="9.0" fill="#f0f0f0" text-anchor="start" textLength="27.80" lengthAdjust="spacingAndGlyphs" >MOTOR</text>
<text x="500.70" y="162.62" font-size="9.0" fill="#f0f0f0" text-anchor="middle" textLength="17.60" lengthAdjust="spacingAndGlyphs" >415V</text>
<text x="500.70" y="316.22" font-size="9.0" fill="#f0f0f0" text-anchor="middle" textLength="17.60" lengthAdjust="spacingAndGlyphs" >415V</text>
<text x="548.60" y="195.42" font-size="9.0" fill="#f0f0f0" text-anchor="middle" textLength="34.00" lengthAdjust="spacingAndGlyphs" >1.5 - 2.5A</text>
<text x="548.60" y="347.22" font-size="9.0" fill="#f0f0f0" text-anchor="middle" textLength="31.50" lengthAdjust="spacingAndGlyphs" >3.7 - 12A</text>
<text x="433.30" y="348.62" font-size="9.0" fill="#f0f0f0" text-anchor="middle" textLength="23.60" lengthAdjust="spacingAndGlyphs" >MAINS</text>
<text x="433.30" y="356.82" font-size="9.0" fill="#f0f0f0" text-anchor="middle" textLength="10.60" lengthAdjust="spacingAndGlyphs" >ON</text>
<text x="344.00" y="418.92" font-size="9.0" fill="#f0f0f0" text-anchor="start" textLength="21.80" lengthAdjust="spacingAndGlyphs" >FS 1A</text>
<text x="364.00" y="374.60" font-size="5.6" fill="#f2f2f2" text-anchor="middle" >5</text>
<text x="575.20" y="374.60" font-size="5.6" fill="#f2f2f2" text-anchor="middle" >8</text>
<text x="595.50" y="374.60" font-size="5.6" fill="#f2f2f2" text-anchor="middle" >6</text>
<text x="524.00" y="311.80" font-size="5.6" fill="#f2f2f2" text-anchor="middle" >7</text>
<text x="654.30" y="444.80" font-size="5.6" fill="#f2f2f2" text-anchor="middle" >5</text>
<text x="670.70" y="446.02" font-size="9.0" fill="#f0f0f0" text-anchor="start" textLength="42.40" lengthAdjust="spacingAndGlyphs" >DIN terminal</text>
<text x="419.00" y="491.62" font-size="9.0" fill="#f0f0f0" text-anchor="middle" textLength="21.00" lengthAdjust="spacingAndGlyphs" >STOP</text>
<text x="463.80" y="491.62" font-size="9.0" fill="#f0f0f0" text-anchor="middle" textLength="24.60" lengthAdjust="spacingAndGlyphs" >START</text>
<text x="508.80" y="487.42" font-size="9.0" fill="#f0f0f0" text-anchor="middle" textLength="32.20" lengthAdjust="spacingAndGlyphs" >SPINDLE</text>
<text x="508.80" y="495.52" font-size="9.0" fill="#f0f0f0" text-anchor="middle" textLength="20.60" lengthAdjust="spacingAndGlyphs" >ONLY</text>
<text x="536.40" y="491.42" font-size="9.0" fill="#f0f0f0" text-anchor="middle" textLength="14.00" lengthAdjust="spacingAndGlyphs" >OFF</text>
<text x="565.00" y="487.42" font-size="9.0" fill="#f0f0f0" text-anchor="middle" textLength="32.20" lengthAdjust="spacingAndGlyphs" >SPINDLE</text>
<text x="565.00" y="495.52" font-size="9.0" fill="#f0f0f0" text-anchor="middle" textLength="30.00" lengthAdjust="spacingAndGlyphs" >&amp; PUMP</text>
<text x="623.20" y="520.04" font-size="8.5" fill="#f0f0f0" text-anchor="start" textLength="107.30" lengthAdjust="spacingAndGlyphs" >COLCHESTER STUDENT Mk2</text>
<text x="623.20" y="529.24" font-size="8.5" fill="#f0f0f0" text-anchor="start" textLength="100.00" lengthAdjust="spacingAndGlyphs" >MOTOR CONTROL CIRCUIT</text>
<text x="623.20" y="538.44" font-size="8.5" fill="#f0f0f0" text-anchor="start" textLength="75.50" lengthAdjust="spacingAndGlyphs" >Drawn By IRS 050114</text>
<text x="484.40" y="75.32" font-size="3.7" fill="#f4f4f4" text-anchor="middle" font-weight="bold" >13</text>
<text x="514.60" y="75.32" font-size="3.7" fill="#f4f4f4" text-anchor="middle" font-weight="bold" >14</text>
<text x="484.20" y="94.82" font-size="3.7" fill="#f4f4f4" text-anchor="middle" font-weight="bold" >1L1</text>
<text x="515.60" y="94.82" font-size="3.7" fill="#f4f4f4" text-anchor="middle" font-weight="bold" >2T1</text>
<text x="484.20" y="114.62" font-size="3.7" fill="#f4f4f4" text-anchor="middle" font-weight="bold" >3L2</text>
<text x="515.60" y="114.62" font-size="3.7" fill="#f4f4f4" text-anchor="middle" font-weight="bold" >4T2</text>
<text x="484.20" y="134.62" font-size="3.7" fill="#f4f4f4" text-anchor="middle" font-weight="bold" >5L3</text>
<text x="515.60" y="134.62" font-size="3.7" fill="#f4f4f4" text-anchor="middle" font-weight="bold" >6T3</text>
<text x="487.20" y="154.12" font-size="3.7" fill="#f4f4f4" text-anchor="middle" font-weight="bold" >A1</text>
<text x="513.80" y="154.12" font-size="3.7" fill="#f4f4f4" text-anchor="middle" font-weight="bold" >A2</text>
<text x="537.20" y="154.12" font-size="3.7" fill="#f4f4f4" text-anchor="middle" font-weight="bold" >95</text>
<text x="564.60" y="154.12" font-size="3.7" fill="#f4f4f4" text-anchor="middle" font-weight="bold" >96</text>
<text x="563.40" y="94.82" font-size="3.7" fill="#f4f4f4" text-anchor="middle" font-weight="bold" >2</text>
<text x="563.40" y="114.62" font-size="3.7" fill="#f4f4f4" text-anchor="middle" font-weight="bold" >4</text>
<text x="563.40" y="134.62" font-size="3.7" fill="#f4f4f4" text-anchor="middle" font-weight="bold" >6</text>
<text x="484.40" y="228.82" font-size="3.7" fill="#f4f4f4" text-anchor="middle" font-weight="bold" >13</text>
<text x="514.60" y="228.82" font-size="3.7" fill="#f4f4f4" text-anchor="middle" font-weight="bold" >14</text>
<text x="484.20" y="248.62" font-size="3.7" fill="#f4f4f4" text-anchor="middle" font-weight="bold" >1L1</text>
<text x="515.60" y="248.62" font-size="3.7" fill="#f4f4f4" text-anchor="middle" font-weight="bold" >2T1</text>
<text x="484.20" y="268.52" font-size="3.7" fill="#f4f4f4" text-anchor="middle" font-weight="bold" >3L2</text>
<text x="515.60" y="268.52" font-size="3.7" fill="#f4f4f4" text-anchor="middle" font-weight="bold" >4T2</text>
<text x="484.20" y="288.32" font-size="3.7" fill="#f4f4f4" text-anchor="middle" font-weight="bold" >5L3</text>
<text x="515.60" y="288.32" font-size="3.7" fill="#f4f4f4" text-anchor="middle" font-weight="bold" >6T3</text>
<text x="487.20" y="307.62" font-size="3.7" fill="#f4f4f4" text-anchor="middle" font-weight="bold" >A1</text>
<text x="513.80" y="307.62" font-size="3.7" fill="#f4f4f4" text-anchor="middle" font-weight="bold" >A2</text>
<text x="537.20" y="307.62" font-size="3.7" fill="#f4f4f4" text-anchor="middle" font-weight="bold" >95</text>
<text x="564.60" y="307.62" font-size="3.7" fill="#f4f4f4" text-anchor="middle" font-weight="bold" >96</text>
<text x="563.40" y="248.62" font-size="3.7" fill="#f4f4f4" text-anchor="middle" font-weight="bold" >2</text>
<text x="563.40" y="268.52" font-size="3.7" fill="#f4f4f4" text-anchor="middle" font-weight="bold" >4</text>
<text x="563.40" y="288.32" font-size="3.7" fill="#f4f4f4" text-anchor="middle" font-weight="bold" >6</text>
<text x="413.40" y="461.92" font-size="3.7" fill="#f4f4f4" text-anchor="middle" font-weight="bold" >1</text>
<text x="424.80" y="461.92" font-size="3.7" fill="#f4f4f4" text-anchor="middle" font-weight="bold" >2</text>
<text x="458.50" y="452.72" font-size="3.7" fill="#f4f4f4" text-anchor="middle" font-weight="bold" >3</text>
<text x="470.20" y="452.72" font-size="3.7" fill="#f4f4f4" text-anchor="middle" font-weight="bold" >4</text>
<text x="504.30" y="452.72" font-size="3.7" fill="#f4f4f4" text-anchor="middle" font-weight="bold" >4</text>
<text x="516.30" y="452.72" font-size="3.7" fill="#f4f4f4" text-anchor="middle" font-weight="bold" >3</text>
<text x="556.30" y="452.72" font-size="3.7" fill="#f4f4f4" text-anchor="middle" font-weight="bold" >3</text>
<text x="568.40" y="452.72" font-size="3.7" fill="#f4f4f4" text-anchor="middle" font-weight="bold" >4</text>
<text x="556.60" y="433.12" font-size="3.7" fill="#f4f4f4" text-anchor="middle" font-weight="bold" >3</text>
<text x="568.20" y="433.12" font-size="3.7" fill="#f4f4f4" text-anchor="middle" font-weight="bold" >4</text>
<g fill="none" stroke="#e4e4e4" stroke-width="0.85">
<path d="M123.51 515.18 L123.51 463.39" />
<path d="M118.15 510.42 L170.54 510.42" />
<path d="M123.5 452.4 l4.4 11.2 h-8.8z M123.5 456 v7.6"/>
<path d="M182.8 510.3 l-12.2 4.4 v-8.8z M178 510.3 h-7.4"/>
</g>
<text x="124.60" y="443.84" font-size="18" fill="#e0e0e0" text-anchor="middle" stroke="#3b3b3b" stroke-width="0.55">Y</text>
<text x="197.20" y="516.79" font-size="17" fill="#e0e0e0" text-anchor="middle" stroke="#3b3b3b" stroke-width="0.55">X</text>
<rect x="245.6" y="460.6" width="3.8" height="3.8" fill="none" stroke="#a828a8" stroke-width="1"/>
</svg>
</body></html>
